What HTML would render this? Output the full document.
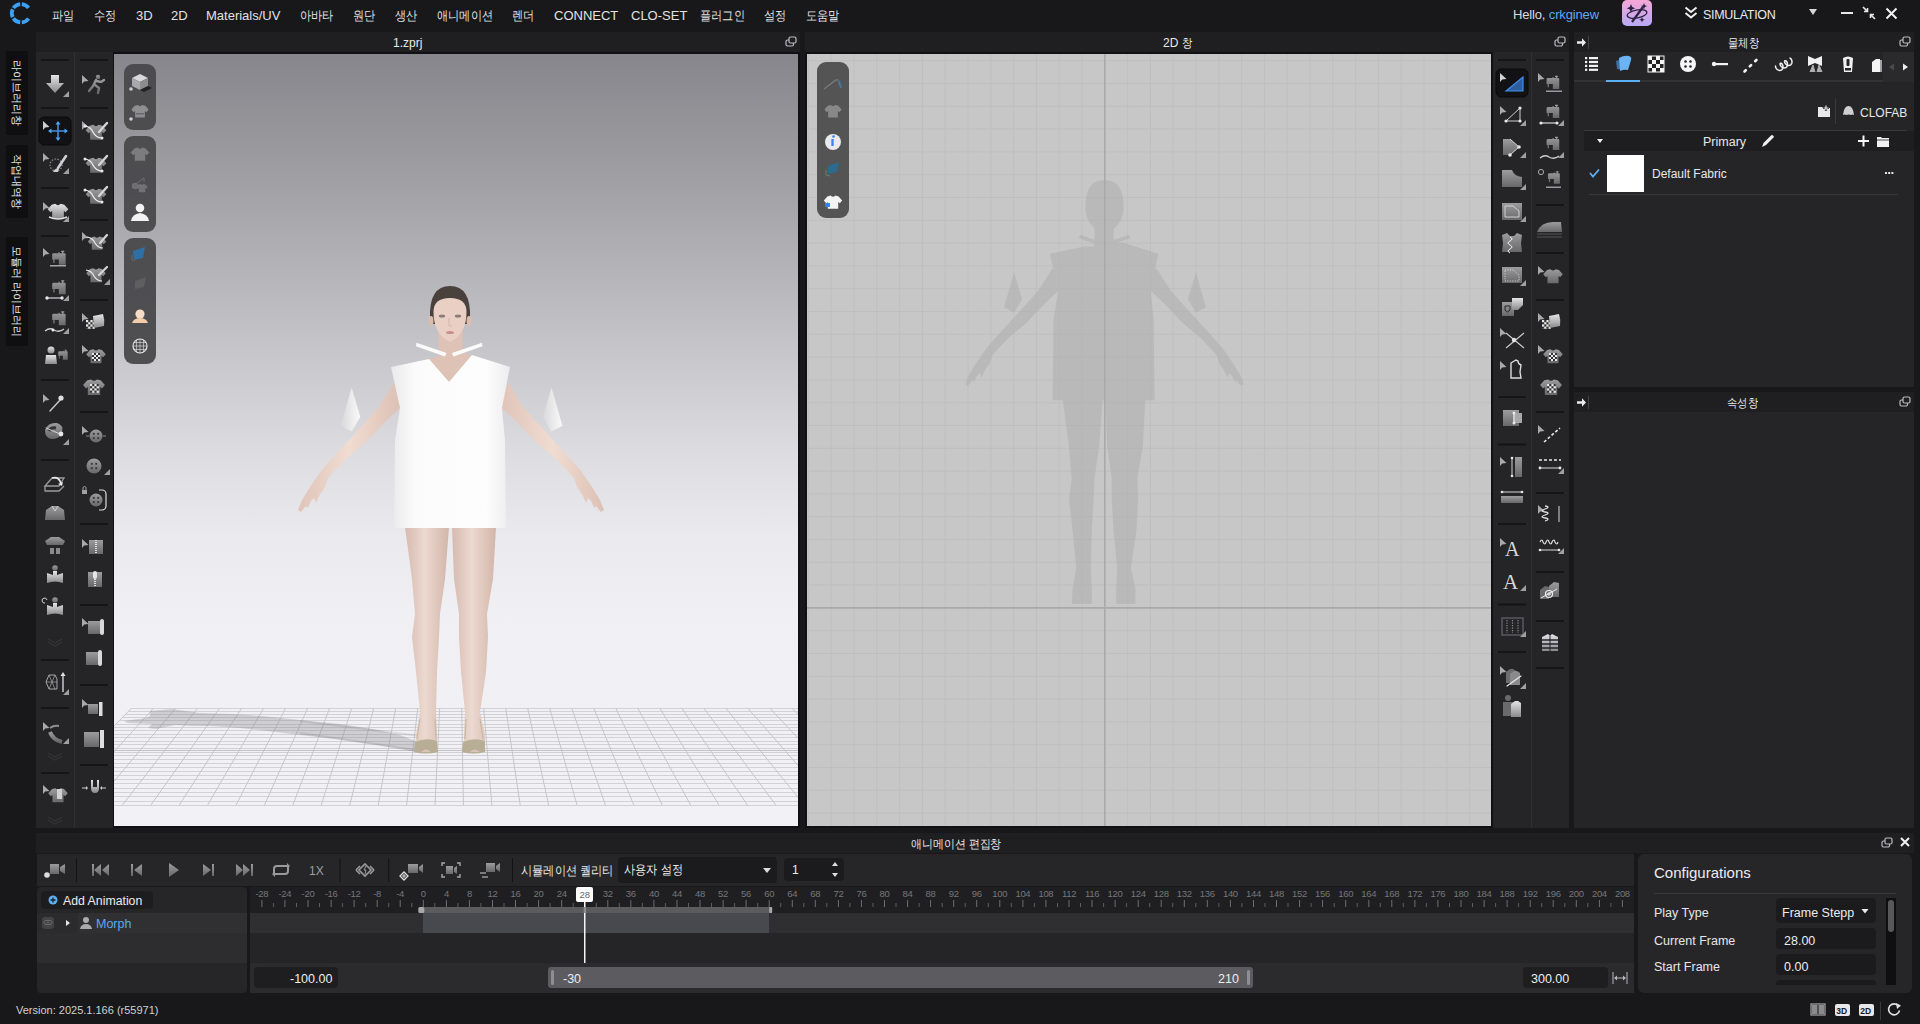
<!DOCTYPE html>
<html><head><meta charset="utf-8">
<style>
*{box-sizing:border-box;margin:0;padding:0}
html,body{width:1920px;height:1024px;overflow:hidden;background:#18181b;font-family:"Liberation Sans",sans-serif;color:#d8d8da;position:relative}
div{position:absolute}
.t{white-space:nowrap;line-height:1}
.menu{font-size:13px;color:#e2e2e4;top:9px}
.k{display:inline-block;transform:scaleX(.86);transform-origin:0 0}
.ttl{background:#1f1f22}
.tb{background:#252528}
.vtab{left:6px;width:22px;background:#0f0f11}
.vtab span{position:absolute;left:4px;writing-mode:vertical-rl;text-orientation:sideways;font-size:11.3px;color:#e6e6e8;line-height:14px}
svg{position:absolute;overflow:visible}
.sp{height:2px;background:#161618}
.ic{width:38px;height:32px}
</style></head><body>

<svg style="left:0;top:0" width="0" height="0"><defs><linearGradient id="gg" x1="0" y1="0" x2="0" y2="1"><stop offset="0" stop-color="#9c9c9f"/><stop offset="1" stop-color="#68686b"/></linearGradient><linearGradient id="gw" x1="0" y1="0" x2="0" y2="1"><stop offset="0" stop-color="#e4e4e6"/><stop offset="1" stop-color="#8a8a8d"/></linearGradient></defs></svg>
<svg style="left:0;top:0" width="40" height="30"><path d="M21.80 4.04A9.2 9.2 0 0 1 28.54 7.92M13.37 8.06A9.2 9.2 0 0 1 20.20 4.04M12.66 17.09A9.2 9.2 0 0 1 12.66 9.31M20.20 22.36A9.2 9.2 0 0 1 13.37 18.34M28.54 18.48A9.2 9.2 0 0 1 21.80 22.36" fill="none" stroke="#3d9ff2" stroke-width="3.8"/></svg>
<div class="t menu" style="left:52px"><span class="k">파일</span></div>
<div class="t menu" style="left:94px"><span class="k">수정</span></div>
<div class="t menu" style="left:136px">3D</div>
<div class="t menu" style="left:171px">2D</div>
<div class="t menu" style="left:206px">Materials/UV</div>
<div class="t menu" style="left:300px"><span class="k">아바타</span></div>
<div class="t menu" style="left:353px"><span class="k">원단</span></div>
<div class="t menu" style="left:395px"><span class="k">생산</span></div>
<div class="t menu" style="left:437px"><span class="k">애니메이션</span></div>
<div class="t menu" style="left:512px"><span class="k">렌더</span></div>
<div class="t menu" style="left:554px">CONNECT</div>
<div class="t menu" style="left:631px">CLO-SET</div>
<div class="t menu" style="left:700px"><span class="k">플러그인</span></div>
<div class="t menu" style="left:764px"><span class="k">설정</span></div>
<div class="t menu" style="left:806px"><span class="k">도움말</span></div>
<div class="t" style="left:1513px;top:8px;font-size:13px;letter-spacing:-.15px;color:#d6dbe6">Hello, <span style="color:#5aaaf0">crkginew</span></div>
<div style="left:1622px;top:0;width:30px;height:26px;border-radius:5px;background:linear-gradient(#f6a6d6,#b7a9f6)"></div>
<svg style="left:1622px;top:0" width="30" height="26" viewBox="0 0 30 26">
 <ellipse cx="15" cy="14" rx="10" ry="4" fill="none" stroke="#2a2340" stroke-width="1.3" transform="rotate(-10 15 14)"/>
 <path d="M10 22 L21 7" stroke="#2a2340" stroke-width="2.2"/>
 <path d="M9 4 l1.2 3 3 1.2 -3 1.2 -1.2 3 -1.2 -3 -3 -1.2 3 -1.2z" fill="#2a2340"/>
 <path d="M22 3 l.9 2.2 2.2 .9 -2.2 .9 -.9 2.2 -.9 -2.2 -2.2 -.9 2.2 -.9z" fill="#2a2340"/>
 <path d="M20 17 l.8 2 2 .8 -2 .8 -.8 2 -.8 -2 -2 -.8 2 -.8z" fill="#2a2340"/>
</svg>
<svg style="left:1684px;top:6px" width="14" height="14" viewBox="0 0 14 14"><path d="M1.5 1.5 L7 6 L12.5 1.5 M1.5 7 L7 11.5 L12.5 7" fill="none" stroke="#f0f0f2" stroke-width="2"/></svg>
<div class="t" style="left:1703px;top:9px;font-size:12.5px;color:#e8e8ea;letter-spacing:-.3px">SIMULATION</div>
<svg style="left:1809px;top:9px" width="8" height="6"><path d="M0 0 H8 L4 6z" fill="#d8d8da"/></svg>
<svg style="left:1841px;top:12px" width="12" height="3"><rect width="12" height="2" fill="#e8e8ea"/></svg>
<svg style="left:1862px;top:6px" width="14" height="14" viewBox="0 0 14 14"><path d="M1 1 L5.5 5.5 M5.5 2 V5.5 H2 M13 13 L8.5 8.5 M8.5 12 V8.5 H12" fill="none" stroke="#e8e8ea" stroke-width="1.6"/></svg>
<svg style="left:1885px;top:7px" width="13" height="13" viewBox="0 0 13 13"><path d="M1.5 1.5 L11.5 11.5 M11.5 1.5 L1.5 11.5" stroke="#f0f0f2" stroke-width="2"/></svg>

<div class="vtab" style="top:51px;height:84px"><span style="top:9px">라이브러리창</span></div>
<div class="vtab" style="top:145px;height:73px"><span style="top:9px">작업내역창</span></div>
<div class="vtab" style="top:237px;height:109px"><span style="top:9px">모듈러 라이브러리</span></div>

<div class="ttl" style="left:36px;top:32px;width:764px;height:20px"></div>
<div class="tb" style="left:36px;top:52px;width:77px;height:776px"></div>
<div style="left:74px;top:52px;width:1px;height:776px;background:#303033"></div>
<div style="left:113px;top:52px;width:687px;height:776px;background:#111113"></div>
<div class="ttl" style="left:805px;top:32px;width:764px;height:20px"></div>
<div style="left:805px;top:52px;width:688px;height:776px;background:#111113"></div>
<div class="tb" style="left:1493px;top:52px;width:76px;height:776px"></div>
<div style="left:1531px;top:52px;width:1px;height:776px;background:#303033"></div>
<div class="ttl" style="left:1574px;top:32px;width:340px;height:20px"></div>
<div class="tb" style="left:1574px;top:52px;width:340px;height:335px"></div>
<div class="ttl" style="left:1574px;top:392px;width:340px;height:20px"></div>
<div class="tb" style="left:1574px;top:412px;width:340px;height:416px"></div>
<div class="ttl" style="left:36px;top:833px;width:1878px;height:20px"></div>
<div style="left:37px;top:854px;width:1597px;height:32px;background:#262629"></div>
<div style="left:37px;top:887px;width:210px;height:106px;background:#262629;border-radius:4px"></div>
<div style="left:37px;top:913px;width:210px;height:20px;background:#2b2b2e"></div>
<div style="left:78px;top:913px;width:169px;height:20px;background:#303033"></div>
<div style="left:37px;top:933px;width:210px;height:30px;background:#2d2d30"></div>
<div style="left:41px;top:891px;width:112px;height:18px;background:#1d1d20;border-radius:4px"></div>
<div style="left:250px;top:887px;width:1384px;height:26px;background:#1f1f21"></div>
<div style="left:250px;top:913px;width:1384px;height:20px;background:#2f2f32"></div>
<div style="left:250px;top:933px;width:1384px;height:30px;background:#252528"></div>
<div style="left:250px;top:963px;width:1384px;height:30px;background:#2b2b2e"></div>
<div style="left:423px;top:913px;width:346px;height:20px;background:#48484f"></div>
<div style="left:420px;top:907px;width:352px;height:6px;background:#5b5b5e"></div>
<div style="left:254px;top:967px;width:84px;height:21px;background:#1e1e20;border-radius:4px"></div>
<div style="left:548px;top:967px;width:705px;height:21px;background:#5c5c60;border-radius:3px"></div>
<div style="left:1523px;top:967px;width:85px;height:21px;background:#1e1e20;border-radius:4px"></div>
<div style="left:618px;top:857px;width:159px;height:26px;background:#1b1b1d;border-radius:4px"></div>
<div style="left:784px;top:858px;width:60px;height:23px;background:#1b1b1d;border-radius:4px"></div>
<div style="left:1638px;top:854px;width:274px;height:139px;background:#262629;border-radius:6px"></div>
<div style="left:1654px;top:893px;width:242px;height:1px;background:#3a3a3d"></div>
<div style="left:1776px;top:898px;width:100px;height:25px;background:#1b1b1d;border-radius:4px"></div>
<div style="left:1776px;top:928px;width:100px;height:21px;background:#1b1b1d;border-radius:4px"></div>
<div style="left:1776px;top:954px;width:100px;height:21px;background:#1b1b1d;border-radius:4px"></div>
<div style="left:1776px;top:980px;width:100px;height:8px;background:#1b1b1d;border-radius:4px"></div>
<div style="left:1654px;top:985px;width:242px;height:8px;background:#262629"></div>
<div style="left:1886px;top:898px;width:10px;height:87px;background:#0f0f11"></div>
<div style="left:1888px;top:900px;width:6px;height:32px;background:#58585b;border-radius:3px"></div>
<div style="left:114px;top:54px;width:684px;height:772px;overflow:hidden;background:linear-gradient(#86868c 0px,#a0a0a5 130px,#c6c6cb 300px,#dcdce1 400px,#eaeaee 480px,#f0f0f4 560px,#f2f2f6 772px)">
<svg style="left:0;top:0" width="684" height="772" viewBox="114 54 684 772">
<path d="M131.7 708.5 H800" stroke="#d2d2d6" stroke-width="1"/>
<path d="M128.8 711.5 H800" stroke="#d2d2d6" stroke-width="1"/>
<path d="M125.8 714.5 H800" stroke="#d2d2d6" stroke-width="1"/>
<path d="M122.7 717.5 H800" stroke="#d2d2d6" stroke-width="1"/>
<path d="M119.6 720.5 H800" stroke="#d2d2d6" stroke-width="1"/>
<path d="M116.5 724.5 H800" stroke="#d2d2d6" stroke-width="1"/>
<path d="M113.3 727.5 H800" stroke="#d2d2d6" stroke-width="1"/>
<path d="M110.0 730.5 H800" stroke="#d2d2d6" stroke-width="1"/>
<path d="M106.7 734.5 H800" stroke="#d2d2d6" stroke-width="1"/>
<path d="M103.3 737.5 H800" stroke="#d2d2d6" stroke-width="1"/>
<path d="M99.9 741.5 H800" stroke="#d2d2d6" stroke-width="1"/>
<path d="M96.4 744.5 H800" stroke="#d2d2d6" stroke-width="1"/>
<path d="M92.8 748.5 H800" stroke="#d2d2d6" stroke-width="1"/>
<path d="M89.2 752.5 H800" stroke="#d2d2d6" stroke-width="1"/>
<path d="M85.6 755.5 H800" stroke="#d2d2d6" stroke-width="1"/>
<path d="M81.9 759.5 H800" stroke="#d2d2d6" stroke-width="1"/>
<path d="M78.1 763.5 H800" stroke="#d2d2d6" stroke-width="1"/>
<path d="M74.3 767.5 H800" stroke="#d2d2d6" stroke-width="1"/>
<path d="M70.4 771.5 H800" stroke="#d2d2d6" stroke-width="1"/>
<path d="M66.4 775.5 H800" stroke="#d2d2d6" stroke-width="1"/>
<path d="M62.5 779.5 H800" stroke="#d2d2d6" stroke-width="1"/>
<path d="M58.4 783.5 H800" stroke="#d2d2d6" stroke-width="1"/>
<path d="M54.3 788.5 H800" stroke="#d2d2d6" stroke-width="1"/>
<path d="M50.1 792.5 H800" stroke="#d2d2d6" stroke-width="1"/>
<path d="M45.9 796.5 H800" stroke="#d2d2d6" stroke-width="1"/>
<path d="M41.7 801.5 H800" stroke="#d2d2d6" stroke-width="1"/>
<path d="M37.3 805.5 H800" stroke="#d2d2d6" stroke-width="1"/>
<path d="M131.7 708 L37.3 805" stroke="#c6c6ca" stroke-width="1"/>
<path d="M153.7 708 L65.7 805" stroke="#c6c6ca" stroke-width="1"/>
<path d="M175.7 708 L94.1 805" stroke="#c6c6ca" stroke-width="1"/>
<path d="M197.7 708 L122.5 805" stroke="#c6c6ca" stroke-width="1"/>
<path d="M219.7 708 L150.9 805" stroke="#c6c6ca" stroke-width="1"/>
<path d="M241.7 708 L179.3 805" stroke="#c6c6ca" stroke-width="1"/>
<path d="M263.7 708 L207.7 805" stroke="#c6c6ca" stroke-width="1"/>
<path d="M285.7 708 L236.1 805" stroke="#c6c6ca" stroke-width="1"/>
<path d="M307.7 708 L264.5 805" stroke="#c6c6ca" stroke-width="1"/>
<path d="M329.7 708 L292.9 805" stroke="#c6c6ca" stroke-width="1"/>
<path d="M351.7 708 L321.3 805" stroke="#c6c6ca" stroke-width="1"/>
<path d="M373.7 708 L349.8 805" stroke="#c6c6ca" stroke-width="1"/>
<path d="M395.7 708 L378.2 805" stroke="#c6c6ca" stroke-width="1"/>
<path d="M417.7 708 L406.6 805" stroke="#c6c6ca" stroke-width="1"/>
<path d="M439.7 708 L435.0 805" stroke="#c6c6ca" stroke-width="1"/>
<path d="M461.7 708 L463.4 805" stroke="#c6c6ca" stroke-width="1"/>
<path d="M483.7 708 L491.8 805" stroke="#c6c6ca" stroke-width="1"/>
<path d="M505.7 708 L520.2 805" stroke="#c6c6ca" stroke-width="1"/>
<path d="M527.7 708 L548.6 805" stroke="#c6c6ca" stroke-width="1"/>
<path d="M549.7 708 L577.0 805" stroke="#c6c6ca" stroke-width="1"/>
<path d="M571.7 708 L605.4 805" stroke="#c6c6ca" stroke-width="1"/>
<path d="M593.7 708 L633.8 805" stroke="#c6c6ca" stroke-width="1"/>
<path d="M615.7 708 L662.2 805" stroke="#c6c6ca" stroke-width="1"/>
<path d="M637.7 708 L690.6 805" stroke="#c6c6ca" stroke-width="1"/>
<path d="M659.7 708 L719.0 805" stroke="#c6c6ca" stroke-width="1"/>
<path d="M681.7 708 L747.4 805" stroke="#c6c6ca" stroke-width="1"/>
<path d="M703.7 708 L775.8 805" stroke="#c6c6ca" stroke-width="1"/>
<path d="M725.7 708 L804.2 805" stroke="#c6c6ca" stroke-width="1"/>
<path d="M747.7 708 L832.6 805" stroke="#c6c6ca" stroke-width="1"/>
<path d="M769.7 708 L861.0 805" stroke="#c6c6ca" stroke-width="1"/>
<path d="M791.7 708 L889.4 805" stroke="#c6c6ca" stroke-width="1"/>
<path d="M813.7 708 L917.8 805" stroke="#c6c6ca" stroke-width="1"/>
<path d="M835.7 708 L946.2 805" stroke="#c6c6ca" stroke-width="1"/>
<path d="M857.7 708 L974.6 805" stroke="#c6c6ca" stroke-width="1"/>
<path d="M114 750.5 H800" stroke="#c4c4c8" stroke-width="1"/>
<defs><linearGradient id="skin" x1="0" x2="1"><stop offset="0" stop-color="#dfc4b9"/><stop offset=".5" stop-color="#f1dcd2"/><stop offset="1" stop-color="#dcc0b4"/></linearGradient><linearGradient id="leg" x1="0" x2="1"><stop offset="0" stop-color="#d6bab0"/><stop offset=".45" stop-color="#ecd9d0"/><stop offset="1" stop-color="#d2b5a9"/></linearGradient><linearGradient id="shirt" x1="0" x2="1"><stop offset="0" stop-color="#e9e9eb"/><stop offset=".2" stop-color="#fbfbfb"/><stop offset=".8" stop-color="#fdfdfd"/><stop offset="1" stop-color="#ececee"/></linearGradient><linearGradient id="flap" x1="0" x2="1"><stop offset="0" stop-color="#d8d8da"/><stop offset="1" stop-color="#fafafa"/></linearGradient></defs>
<polygon points="150,711 172,709 186,711 200,713 232,714 262,716 300,720 340,724 372,729 400,735 418,742 428,750 422,753 400,749 370,744 335,739 300,735 268,731 240,728 210,726 192,726 176,725 165,727 156,729 148,728 152,724 128,723 124,721 146,718 150,716" fill="#78787e" fill-opacity=".29"/>
<path d="M300 721 L420 736 M300 733 L430 752" stroke="#78787e" stroke-opacity=".18" stroke-width="2"/>
<polygon points="394,383 378,408 359,429 338,452 321,471 310,487 302,500 298,510 301,512 306,506 307.5,508 311,501 314,498 316,503 319,496 325,487 328,478 346,459 365,443 384,423 400,408 400,390" fill="url(#skin)"/>
<polygon points="508,383 524,408 543,429 564,452 581,471 592,487 600,500 604,510 601,512 596,506 594.5,508 591,501 588,498 586,503 583,496 577,487 574,478 556,459 537,443 518,423 502,408 502,390" fill="url(#skin)"/>
<polygon points="405,527 412,579 415,614 412,637 416,672 420,712 416,735 415,752 437,752 437,735 436,712 437,672 439,637 440,614 445,579 449,527" fill="url(#leg)"/>
<polygon points="452,527 454,579 459,614 459,637 461,672 465,712 464,735 464,752 485,752 485,735 480,712 486,672 488,637 487,614 493,579 496,527" fill="url(#leg)"/>
<path d="M415 742 q11 -5 22 -1 l1 11 q-12 3 -24 0z M463 742 q11 -5 22 -1 l0 11 q-12 3 -23 0z" fill="#b8ae96"/><path d="M417 739 l3 -20 M436 739 l-1 -20 M465 739 l1 -20 M483 739 l-3 -20" stroke="#c2b8a2" stroke-width="1"/><path d="M421 752 q5 -5 10 0z M470 752 q5 -5 10 0z" fill="#dcc3b8"/>
<path d="M438.5 330 h24 v22 l10 4 l-23.5 27 l-20.5 -24 l10 -3z" fill="#dec2b6"/>
<path d="M430 318 q-1 -32 20 -32 q21 0 20 32 l-3 6 l-34 0z" fill="#4a403c"/>
<ellipse cx="431" cy="321" rx="2.5" ry="5" fill="#dcbcae"/><ellipse cx="469" cy="321" rx="2.5" ry="5" fill="#dcbcae"/>
<path d="M433.5 312 q0 -14 16.5 -14 q16.5 0 16.5 14 q0 22 -16.5 30 q-16.5 -8 -16.5 -30z" fill="#ead0c4"/>
<ellipse cx="442" cy="316" rx="3.2" ry="1.5" fill="#8a7a78"/><ellipse cx="458" cy="316" rx="3.2" ry="1.5" fill="#8a7a78"/><ellipse cx="450" cy="332.5" rx="4" ry="1.6" fill="#c48e8c"/><path d="M449 318 v8 h3" stroke="#d6b4a8" fill="none"/>
<polygon points="391,367 429,359 449,382 472,355 510,367 502,408 505,440 506,528 394,528 395,440 400,408" fill="url(#shirt)"/>
<polygon points="351.6,387.6 340.6,425.7 351.6,431.6 360.3,417" fill="url(#flap)"/><polygon points="551.5,387.6 562.4,425.7 551.5,431.6 542.7,417" fill="url(#flap)"/>
<path d="M416.5 342.7 L446.5 353 L445 356.5 L416 346.2z M482 342.7 L452 353 L453.5 356.5 L482.5 346.2z" fill="#fbfbfb"/>
<rect x="124" y="64" width="32" height="66" rx="9" fill="#4a4a4d" fill-opacity=".96"/>
<rect x="124" y="136" width="32" height="96" rx="9" fill="#4a4a4d" fill-opacity=".96"/>
<rect x="124" y="238" width="32" height="126" rx="9" fill="#4a4a4d" fill-opacity=".96"/>
<path d="M132 78 l8 -4 l8 4 l-8 4z" fill="#d9d9db"/><path d="M132 78 v8 l8 4 v-8z" fill="#a9a9ac"/><path d="M148 78 v8 l-8 4 v-8z" fill="#8c8c8f"/><path d="M140 90 l8 -4 l4 2 l-8 4z" fill="#222"/><circle cx="131" cy="89" r="1.8" fill="#d0d0d2"/>
<path transform="translate(140 111) scale(0.75)" d="M-3 -8 L-7 -7 L-11.5 -2 L-8.5 1.5 L-6.5 0 L-6.5 8.5 L6.5 8.5 L6.5 0 L8.5 1.5 L11.5 -2 L7 -7 L3 -8 Q0 -5 -3 -8z" fill="#8e8e91"/><rect x="136" y="113" width="8" height="1.5" fill="#6a6a6d"/><circle cx="131" cy="119" r="1.8" fill="#d0d0d2"/>
<path transform="translate(140 154) scale(0.8)" d="M-3 -8 L-7 -7 L-11.5 -2 L-8.5 1.5 L-6.5 0 L-6.5 8.5 L6.5 8.5 L6.5 0 L8.5 1.5 L11.5 -2 L7 -7 L3 -8 Q0 -5 -3 -8z" fill="#7c7c7f"/>
<circle cx="135" cy="186" r="3.2" fill="#6f6f72"/><path d="M136 184 l8 -6 v4" stroke="#6f6f72" stroke-width="1" fill="none"/><path transform="translate(142 188) scale(0.5)" d="M-3 -8 L-7 -7 L-11.5 -2 L-8.5 1.5 L-6.5 0 L-6.5 8.5 L6.5 8.5 L6.5 0 L8.5 1.5 L11.5 -2 L7 -7 L3 -8 Q0 -5 -3 -8z" fill="#727275"/>
<circle cx="140" cy="208" r="4.3" fill="#f2f2f2"/><path d="M131 221 q1 -7 9 -8 q8 1 9 8z" fill="#f2f2f2"/>
<path d="M133 251 l12 -4 l-2 11 l-9 2z" fill="#2e6fa6"/><path d="M132 255 v5 l3 1" stroke="#666" fill="none"/>
<path d="M135 281 l11 -4 l-2 10 l-9 2z" fill="#5e5e61"/>
<circle cx="140" cy="314" r="4.6" fill="#f6dcc4"/><path d="M132 323 q2 -5 8 -5 q6 0 8 5z" fill="#f3cda9"/>
<circle cx="140" cy="346" r="7" fill="none" stroke="#e6e6e8" stroke-width="1.2"/><path d="M133 346 h14 M140 339 v14 M134 342.5 h12 M134 349.5 h12 M136.5 340 v12 M143.5 340 v12" stroke="#e6e6e8" stroke-width=".6"/>
</svg></div>
<div style="left:807px;top:54px;width:684px;height:772px;overflow:hidden;background:#c7c7c7">
<svg style="left:0;top:0" width="684" height="772" viewBox="807 54 684 772">
<path d="M808.4 54 V826" stroke="#bfbfbf" stroke-width="1"/>
<path d="M831.2 54 V826" stroke="#bfbfbf" stroke-width="1"/>
<path d="M854.0 54 V826" stroke="#bfbfbf" stroke-width="1"/>
<path d="M876.8 54 V826" stroke="#bfbfbf" stroke-width="1"/>
<path d="M899.6 54 V826" stroke="#bfbfbf" stroke-width="1"/>
<path d="M922.4 54 V826" stroke="#bfbfbf" stroke-width="1"/>
<path d="M945.2 54 V826" stroke="#bfbfbf" stroke-width="1"/>
<path d="M968.0 54 V826" stroke="#bfbfbf" stroke-width="1"/>
<path d="M990.8 54 V826" stroke="#bfbfbf" stroke-width="1"/>
<path d="M1013.6 54 V826" stroke="#bfbfbf" stroke-width="1"/>
<path d="M1036.4 54 V826" stroke="#bfbfbf" stroke-width="1"/>
<path d="M1059.2 54 V826" stroke="#bfbfbf" stroke-width="1"/>
<path d="M1082.0 54 V826" stroke="#bfbfbf" stroke-width="1"/>
<path d="M1127.6 54 V826" stroke="#bfbfbf" stroke-width="1"/>
<path d="M1150.4 54 V826" stroke="#bfbfbf" stroke-width="1"/>
<path d="M1173.2 54 V826" stroke="#bfbfbf" stroke-width="1"/>
<path d="M1196.0 54 V826" stroke="#bfbfbf" stroke-width="1"/>
<path d="M1218.8 54 V826" stroke="#bfbfbf" stroke-width="1"/>
<path d="M1241.6 54 V826" stroke="#bfbfbf" stroke-width="1"/>
<path d="M1264.4 54 V826" stroke="#bfbfbf" stroke-width="1"/>
<path d="M1287.2 54 V826" stroke="#bfbfbf" stroke-width="1"/>
<path d="M1310.0 54 V826" stroke="#bfbfbf" stroke-width="1"/>
<path d="M1332.8 54 V826" stroke="#bfbfbf" stroke-width="1"/>
<path d="M1355.6 54 V826" stroke="#bfbfbf" stroke-width="1"/>
<path d="M1378.4 54 V826" stroke="#bfbfbf" stroke-width="1"/>
<path d="M1401.2 54 V826" stroke="#bfbfbf" stroke-width="1"/>
<path d="M1424.0 54 V826" stroke="#bfbfbf" stroke-width="1"/>
<path d="M1446.8 54 V826" stroke="#bfbfbf" stroke-width="1"/>
<path d="M1469.6 54 V826" stroke="#bfbfbf" stroke-width="1"/>
<path d="M807 37.9 H1491" stroke="#bfbfbf" stroke-width="1"/>
<path d="M807 60.7 H1491" stroke="#bfbfbf" stroke-width="1"/>
<path d="M807 83.5 H1491" stroke="#bfbfbf" stroke-width="1"/>
<path d="M807 106.3 H1491" stroke="#bfbfbf" stroke-width="1"/>
<path d="M807 129.1 H1491" stroke="#bfbfbf" stroke-width="1"/>
<path d="M807 151.9 H1491" stroke="#bfbfbf" stroke-width="1"/>
<path d="M807 174.7 H1491" stroke="#bfbfbf" stroke-width="1"/>
<path d="M807 197.5 H1491" stroke="#bfbfbf" stroke-width="1"/>
<path d="M807 220.3 H1491" stroke="#bfbfbf" stroke-width="1"/>
<path d="M807 243.1 H1491" stroke="#bfbfbf" stroke-width="1"/>
<path d="M807 265.9 H1491" stroke="#bfbfbf" stroke-width="1"/>
<path d="M807 288.7 H1491" stroke="#bfbfbf" stroke-width="1"/>
<path d="M807 311.5 H1491" stroke="#bfbfbf" stroke-width="1"/>
<path d="M807 334.3 H1491" stroke="#bfbfbf" stroke-width="1"/>
<path d="M807 357.1 H1491" stroke="#bfbfbf" stroke-width="1"/>
<path d="M807 379.9 H1491" stroke="#bfbfbf" stroke-width="1"/>
<path d="M807 402.7 H1491" stroke="#bfbfbf" stroke-width="1"/>
<path d="M807 425.5 H1491" stroke="#bfbfbf" stroke-width="1"/>
<path d="M807 448.3 H1491" stroke="#bfbfbf" stroke-width="1"/>
<path d="M807 471.1 H1491" stroke="#bfbfbf" stroke-width="1"/>
<path d="M807 493.9 H1491" stroke="#bfbfbf" stroke-width="1"/>
<path d="M807 516.7 H1491" stroke="#bfbfbf" stroke-width="1"/>
<path d="M807 539.5 H1491" stroke="#bfbfbf" stroke-width="1"/>
<path d="M807 562.3 H1491" stroke="#bfbfbf" stroke-width="1"/>
<path d="M807 585.1 H1491" stroke="#bfbfbf" stroke-width="1"/>
<path d="M807 630.7 H1491" stroke="#bfbfbf" stroke-width="1"/>
<path d="M807 653.5 H1491" stroke="#bfbfbf" stroke-width="1"/>
<path d="M807 676.3 H1491" stroke="#bfbfbf" stroke-width="1"/>
<path d="M807 699.1 H1491" stroke="#bfbfbf" stroke-width="1"/>
<path d="M807 721.9 H1491" stroke="#bfbfbf" stroke-width="1"/>
<path d="M807 744.7 H1491" stroke="#bfbfbf" stroke-width="1"/>
<path d="M807 767.5 H1491" stroke="#bfbfbf" stroke-width="1"/>
<path d="M807 790.3 H1491" stroke="#bfbfbf" stroke-width="1"/>
<path d="M807 813.1 H1491" stroke="#bfbfbf" stroke-width="1"/>
<g transform="translate(694.13 -80.15) scale(0.9099)" opacity=".5"><polygon points="394,383 378,408 359,429 338,452 321,471 310,487 302,500 298,510 301,512 306,506 307.5,508 311,501 314,498 316,503 319,496 325,487 328,478 346,459 365,443 384,423 400,408 400,390" fill="#adadad"/><polygon points="508,383 524,408 543,429 564,452 581,471 592,487 600,500 604,510 601,512 596,506 594.5,508 591,501 588,498 586,503 583,496 577,487 574,478 556,459 537,443 518,423 502,408 502,390" fill="#adadad"/><polygon points="405,527 412,579 415,614 412,637 416,672 420,712 416,735 415,752 437,752 437,735 436,712 437,672 439,637 440,614 445,579 449,527" fill="#adadad"/><polygon points="452,527 454,579 459,614 459,637 461,672 465,712 464,735 464,752 485,752 485,735 480,712 486,672 488,637 487,614 493,579 496,527" fill="#adadad"/><path d="M440 330 h21 v25 l11 0 l-23 28 l-21 -24 l12 0z" fill="#adadad"/><path d="M430 318 q-1 -32 21 -32 q22 0 21 32 q-2 20 -21 27 q-19 -7 -21 -27z" fill="#adadad"/><polygon points="391,367 429,359 449,382 472,355 510,367 502,408 505,440 506,528 394,528 395,440 400,408" fill="#adadad"/><polygon points="351.6,387.6 340.6,425.7 351.6,431.6 360.3,417" fill="#adadad"/><polygon points="551.5,387.6 562.4,425.7 551.5,431.6 542.7,417" fill="#adadad"/><path d="M424 346 L447 354 L446 358 L423 350z M478 346 L455 354 L456 358 L479 350z" fill="#adadad"/></g>
<path d="M1104.8 54 V826" stroke="#a9a9a9" stroke-width="1.6"/>
<path d="M807 607.9 H1491" stroke="#a9a9a9" stroke-width="1.6"/>
<rect x="817" y="62" width="32" height="156" rx="9" fill="#515151" fill-opacity=".97"/>
<path d="M824 89 l12 -9 q2 -1 3 2 l2 6" stroke="#777" stroke-width="1.5" fill="none"/><path d="M838 80 q4 3 3 8" stroke="#3a6ea0" stroke-width="1.2" fill="none"/>
<path transform="translate(833 111) scale(0.75)" d="M-3 -8 L-7 -7 L-11.5 -2 L-8.5 1.5 L-6.5 0 L-6.5 8.5 L6.5 8.5 L6.5 0 L8.5 1.5 L11.5 -2 L7 -7 L3 -8 Q0 -5 -3 -8z" fill="#888"/>
<circle cx="833" cy="142" r="8" fill="#e9e9ee"/><path d="M832.5 139 v7" stroke="#3a82f0" stroke-width="2.3"/><circle cx="833.5" cy="136.5" r="1.3" fill="#3a82f0"/>
<path d="M828 166 l11 -4 l-2 10 l-9 2z" fill="#2d6a8f"/><path d="M826 170 v5 l4 1" stroke="#777" fill="none"/>
<path transform="translate(833 202) scale(0.8)" d="M-3 -8 L-7 -7 L-11.5 -2 L-8.5 1.5 L-6.5 0 L-6.5 8.5 L6.5 8.5 L6.5 0 L8.5 1.5 L11.5 -2 L7 -7 L3 -8 Q0 -5 -3 -8z" fill="#f4f4f4"/><rect x="825" y="203" width="5" height="4" fill="#3a82f0"/>
</svg></div>
<svg style="left:0;top:0" width="1920" height="1024">
<rect x="41" y="59" width="28" height="2" fill="#151517"/>
<rect x="41" y="107" width="28" height="2" fill="#151517"/>
<rect x="41" y="187" width="28" height="2" fill="#151517"/>
<rect x="41" y="235" width="28" height="2" fill="#151517"/>
<rect x="41" y="379" width="28" height="2" fill="#151517"/>
<rect x="41" y="459" width="28" height="2" fill="#151517"/>
<rect x="41" y="659" width="28" height="2" fill="#151517"/>
<rect x="41" y="707" width="28" height="2" fill="#151517"/>
<rect x="41" y="772" width="28" height="2" fill="#151517"/>
<rect x="80" y="59" width="28" height="2" fill="#151517"/>
<rect x="80" y="107" width="28" height="2" fill="#151517"/>
<rect x="80" y="219" width="28" height="2" fill="#151517"/>
<rect x="80" y="299" width="28" height="2" fill="#151517"/>
<rect x="80" y="411" width="28" height="2" fill="#151517"/>
<rect x="80" y="523" width="28" height="2" fill="#151517"/>
<rect x="80" y="604" width="28" height="2" fill="#151517"/>
<rect x="80" y="684" width="28" height="2" fill="#151517"/>
<rect x="80" y="764" width="28" height="2" fill="#151517"/>
<path d="M51 75 h8 v8 h5 l-9 10 l-9 -10 h5z" fill="url(#gw)"/><path d="M69 97 h-6 l6 -6z" fill="#a0a0a3"/>
<rect x="39" y="117" width="32" height="28" rx="5" fill="#121214" stroke="#0a0a0a" stroke-width="1"/>
<path d="M43 121 v9 l2.2 -2.6 L49.5 127z" fill="#cfcfd2"/>
<path d="M58 122 v18 M49 131 h18" stroke="#3d8fe0" stroke-width="1.6"/><path d="M58 121 l-2.5 3.5 h5z M58 141 l-2.5 -3.5 h5z M48 131 l3.5 -2.5 v5z M68 131 l-3.5 -2.5 v5z" fill="#4aa3f5"/>
<path d="M43 153 v9 l2.2 -2.6 L49.5 159z" fill="#a9a9ac"/><circle cx="56" cy="165" r="6" fill="none" stroke="#9a9a9d" stroke-width="1.2" stroke-dasharray="1.3 1.6"/><path d="M66 156 L58 168" stroke="#cfcfd2" stroke-width="2.6" stroke-linecap="round"/><path d="M53 172 q2 -4 6 -4 l-1 4z" fill="#cfcfd2"/><path d="M69 174 h-6 l6 -6z" fill="#a0a0a3"/>
<path d="M43 202 v9 l2.2 -2.6 L49.5 208z" fill="#a9a9ac"/><path transform="translate(58 211) scale(0.9)" d="M-3 -8 L-7 -7 L-11.5 -2 L-8.5 1.5 L-6.5 0 L-6.5 8.5 L6.5 8.5 L6.5 0 L8.5 1.5 L11.5 -2 L7 -7 L3 -8 Q0 -5 -3 -8z" fill="url(#gw)"/><path d="M49 217 q9 4 18 0" stroke="#e0e0e2" stroke-width="1.4" fill="none"/><path d="M69 222 h-6 l6 -6z" fill="#a0a0a3"/>
<path d="M43 248 v9 l2.2 -2.6 L49.5 254z" fill="#a9a9ac"/><path transform="translate(59 259.0) scale(0.977)" d="M-7 -4.5 q0 -1.5 1.5 -1.5 h5 v-1 h1.2 v1 h2.3 v-1.2 h-0.8 v-1.2 h3.2 v1.2 h-0.8 v1.2 h1.2 q1 0 1 1 v11 h-7 v-5.5 h-4.3 v3.7 h-1.4 v-3.7 h-1.1z" fill="url(#gg)"/><rect x="50" y="265" width="16" height="1.5" fill="#a5a5a8"/>
<path transform="translate(59 288.5) scale(0.977)" d="M-7 -4.5 q0 -1.5 1.5 -1.5 h5 v-1 h1.2 v1 h2.3 v-1.2 h-0.8 v-1.2 h3.2 v1.2 h-0.8 v1.2 h1.2 q1 0 1 1 v11 h-7 v-5.5 h-4.3 v3.7 h-1.4 v-3.7 h-1.1z" fill="url(#gg)"/><path d="M47 298 h15" stroke="#d8d8da" stroke-width="1.2"/><circle cx="47" cy="298" r="1.7" fill="#e8e8ea"/><circle cx="62" cy="298" r="1.7" fill="#e8e8ea"/><path d="M69 301 h-6 l6 -6z" fill="#a0a0a3"/>
<path transform="translate(59 319.5) scale(0.977)" d="M-7 -4.5 q0 -1.5 1.5 -1.5 h5 v-1 h1.2 v1 h2.3 v-1.2 h-0.8 v-1.2 h3.2 v1.2 h-0.8 v1.2 h1.2 q1 0 1 1 v11 h-7 v-5.5 h-4.3 v3.7 h-1.4 v-3.7 h-1.1z" fill="url(#gg)"/><path d="M45 331 q5 -4 9 -1 q5 3 10 -1" fill="none" stroke="#cfcfd2" stroke-width="1.3"/><circle cx="53" cy="330" r="1.5" fill="#e8e8ea"/><path d="M69 334 h-6 l6 -6z" fill="#a0a0a3"/>
<g transform="translate(51 356) scale(1.0)"><circle cx="0" cy="-6" r="3.5" fill="url(#gw)"/><path d="M-5 -1 h10 l1 9 h-12z" fill="url(#gw)"/></g><path transform="translate(63 355.5) scale(0.690)" d="M-7 -4.5 q0 -1.5 1.5 -1.5 h5 v-1 h1.2 v1 h2.3 v-1.2 h-0.8 v-1.2 h3.2 v1.2 h-0.8 v1.2 h1.2 q1 0 1 1 v11 h-7 v-5.5 h-4.3 v3.7 h-1.4 v-3.7 h-1.1z" fill="url(#gg)"/>
<path d="M43 394 v9 l2.2 -2.6 L49.5 400z" fill="#a9a9ac"/><path d="M50 411 L61 399" stroke="#c8c8ca" stroke-width="1.4" stroke-linecap="round"/><circle cx="61" cy="398" r="2.6" fill="#dedee0"/>
<path d="M45 430 q3 -8 12 -7 q7 2 5 10 q-2 6 -11 6 q-6 -1 -6 -9z" fill="url(#gg)"/><path d="M49 431 q2 -4 7 -3" stroke="#333" stroke-width="3" fill="none"/><path d="M46 428 L60 434" stroke="#d0d0d2" stroke-width="1" stroke-linecap="round"/><circle cx="61" cy="434" r="2.4" fill="#e6e6e8"/><path d="M69 445 h-6 l6 -6z" fill="#a0a0a3"/>
<path d="M45 486 l7 -8 l12 0 l-5 8 z M45 486 v5 h14 l5 -5" fill="none" stroke="#9a9a9d" stroke-width="1.3"/><path d="M52 478 q8 -2 9 7" stroke="#e8e8ea" stroke-width="1.6" fill="none"/><path d="M58 484 l4 2 l1 -4z" fill="#e8e8ea"/>
<path d="M46 510 l6 -4 h6 l6 4 l1 10 h-20z" fill="url(#gg)"/><path d="M52 506 l3 5 l3 -5" stroke="#cfcfd2" stroke-width="1" fill="none"/>
<path d="M45 541 l6 -4 h8 l6 4 l-2 4 h-16z" fill="url(#gg)"/><rect x="50" y="548" width="4" height="6" fill="#8a8a8d"/><rect x="56" y="548" width="4" height="6" fill="#8a8a8d"/>
<circle cx="55" cy="568" r="2.8" fill="url(#gg)"/><path d="M53 571 h4 v4 l6 -2 v10 q-8 -3 -16 0 v-10 l6 2z" fill="url(#gw)"/>
<circle cx="55" cy="600" r="2.8" fill="url(#gg)"/><path d="M53 603 h4 v4 l6 -2 v10 q-8 -3 -16 0 v-10 l6 2z" fill="url(#gw)"/><path d="M45 603 a2.5 2.5 0 1 1 2 -3" fill="none" stroke="#cfcfd2" stroke-width="1"/>
<path d="M48 639 l7 4 l7 -4 M48 642 l7 4 l7 -4" fill="none" stroke="#343437" stroke-width="1.1"/>
<path d="M46 682 l3 -7 h6 l2 4 v10 h-8 z" fill="none" stroke="#a8a8ab" stroke-width="1"/><path d="M49 675 l6 14 M55 675 l-6 14 M46 682 h11" stroke="#a8a8ab" stroke-width=".7"/><path d="M63 674 v18" stroke="#e0e0e2" stroke-width="1.3"/><path d="M63 672 l-2.5 4 h5z" fill="#e0e0e2"/><path d="M69 695 h-6 l6 -6z" fill="#a0a0a3"/>
<path d="M43 722 v9 l2.2 -2.6 L49.5 728z" fill="#a9a9ac"/><path d="M50 732 q3 8 12 10" stroke="url(#gg)" stroke-width="4" fill="none"/><path d="M50 728 q4 -3 9 -2" stroke="#8f8f92" stroke-width="2" fill="none"/><path d="M69 744 h-6 l6 -6z" fill="#a0a0a3"/>
<path d="M48 753 l7 4 l7 -4 M48 756 l7 4 l7 -4" fill="none" stroke="#343437" stroke-width="1.1"/>
<path d="M43 785 v9 l2.2 -2.6 L49.5 791z" fill="#a9a9ac"/><path transform="translate(58 795) scale(0.85)" d="M-3 -8 L-7 -7 L-11.5 -2 L-8.5 1.5 L-6.5 0 L-6.5 8.5 L6.5 8.5 L6.5 0 L8.5 1.5 L11.5 -2 L7 -7 L3 -8 Q0 -5 -3 -8z" fill="url(#gg)"/><rect x="57" y="789" width="5" height="10" fill="#d0d0d2"/>
<path d="M48 817 l7 4 l7 -4 M48 820 l7 4 l7 -4" fill="none" stroke="#343437" stroke-width="1.1"/>
<path d="M82 75 v9 l2.2 -2.6 L88.5 81z" fill="#a9a9ac"/><circle cx="98" cy="77" r="2.2" fill="url(#gg)"/><path d="M96 80 l-3 6 l-4 5 M95 85 l4 3 l-1 5 M96 81 l5 1 l3 -2" stroke="url(#gg)" stroke-width="2.4" fill="none" stroke-linecap="round"/>
<path d="M82 121 v9 l2.2 -2.6 L88.5 127z" fill="#a9a9ac"/>
<path transform="translate(96 132) scale(0.9)" d="M-3 -8 L-7 -7 L-11.5 -2 L-8.5 1.5 L-6.5 0 L-6.5 8.5 L6.5 8.5 L6.5 0 L8.5 1.5 L11.5 -2 L7 -7 L3 -8 Q0 -5 -3 -8z" fill="url(#gg)"/><path d="M107 123 L99 132" stroke="#d5d5d7" stroke-width="2.4" stroke-linecap="round"/><path d="M85 126 q6 1 8 6 q3 6 9 6" fill="none" stroke="#f0f0f2" stroke-width="1.2"/><circle cx="85" cy="126" r="1.5" fill="#e8e8ea"/><circle cx="102" cy="138" r="1.5" fill="#e8e8ea"/>
<path transform="translate(96 165) scale(0.9)" d="M-3 -8 L-7 -7 L-11.5 -2 L-8.5 1.5 L-6.5 0 L-6.5 8.5 L6.5 8.5 L6.5 0 L8.5 1.5 L11.5 -2 L7 -7 L3 -8 Q0 -5 -3 -8z" fill="url(#gg)"/><path d="M107 156 L99 165" stroke="#d5d5d7" stroke-width="2.4" stroke-linecap="round"/><path d="M85 159 q6 1 8 6 q3 6 9 6" fill="none" stroke="#f0f0f2" stroke-width="1.2"/><circle cx="85" cy="159" r="1.5" fill="#e8e8ea"/><circle cx="102" cy="171" r="1.5" fill="#e8e8ea"/>
<path transform="translate(96 196) scale(0.9)" d="M-3 -8 L-7 -7 L-11.5 -2 L-8.5 1.5 L-6.5 0 L-6.5 8.5 L6.5 8.5 L6.5 0 L8.5 1.5 L11.5 -2 L7 -7 L3 -8 Q0 -5 -3 -8z" fill="url(#gg)"/><path d="M107 187 L99 196" stroke="#d5d5d7" stroke-width="2.4" stroke-linecap="round"/><path d="M85 190 q6 1 8 6 q3 6 9 6" fill="none" stroke="#f0f0f2" stroke-width="1.2"/><circle cx="85" cy="190" r="1.5" fill="#e8e8ea"/><circle cx="102" cy="202" r="1.5" fill="#e8e8ea"/>
<path d="M82 232 v9 l2.2 -2.6 L88.5 238z" fill="#a9a9ac"/><path transform="translate(97 243) scale(0.8)" d="M-3 -8 L-7 -7 L-11.5 -2 L-8.5 1.5 L-6.5 0 L-6.5 8.5 L6.5 8.5 L6.5 0 L8.5 1.5 L11.5 -2 L7 -7 L3 -8 Q0 -5 -3 -8z" fill="url(#gg)"/><path d="M107 235 L100 243" stroke="#d5d5d7" stroke-width="2.2" stroke-linecap="round"/><path d="M87 237 q6 1 8 6 q3 5 8 5" fill="none" stroke="#f0f0f2" stroke-width="1.1"/>
<path transform="translate(96 275) scale(0.85)" d="M-3 -8 L-7 -7 L-11.5 -2 L-8.5 1.5 L-6.5 0 L-6.5 8.5 L6.5 8.5 L6.5 0 L8.5 1.5 L11.5 -2 L7 -7 L3 -8 Q0 -5 -3 -8z" fill="url(#gg)"/><path d="M107 267 L99 275" stroke="#d5d5d7" stroke-width="2.2" stroke-linecap="round"/><path d="M86 270 q6 1 8 6 q3 5 8 5" fill="none" stroke="#f0f0f2" stroke-width="1.1"/><path d="M110 285 h-6 l6 -6z" fill="#a0a0a3"/>
<path d="M82 313 v9 l2.2 -2.6 L88.5 319z" fill="#a9a9ac"/><rect x="86" y="320" width="8.8" height="8.8" fill="#e8e8e8"/><rect x="86.0" y="322.2" width="2.2" height="2.2" fill="#333"/><rect x="86.0" y="326.6" width="2.2" height="2.2" fill="#333"/><rect x="88.2" y="320.0" width="2.2" height="2.2" fill="#333"/><rect x="88.2" y="324.4" width="2.2" height="2.2" fill="#333"/><rect x="90.4" y="322.2" width="2.2" height="2.2" fill="#333"/><rect x="90.4" y="326.6" width="2.2" height="2.2" fill="#333"/><rect x="92.6" y="320.0" width="2.2" height="2.2" fill="#333"/><rect x="92.6" y="324.4" width="2.2" height="2.2" fill="#333"/><path d="M93 316 l10 -2 q2 6 1 12 l-10 2z" fill="url(#gw)"/>
<path d="M82 345 v9 l2.2 -2.6 L88.5 351z" fill="#a9a9ac"/><path transform="translate(96 356) scale(0.85)" d="M-3 -8 L-7 -7 L-11.5 -2 L-8.5 1.5 L-6.5 0 L-6.5 8.5 L6.5 8.5 L6.5 0 L8.5 1.5 L11.5 -2 L7 -7 L3 -8 Q0 -5 -3 -8z" fill="url(#gg)"/><rect x="92" y="353" width="8" height="8" fill="#e8e8e8"/><rect x="92" y="355" width="2" height="2" fill="#333"/><rect x="92" y="359" width="2" height="2" fill="#333"/><rect x="94" y="353" width="2" height="2" fill="#333"/><rect x="94" y="357" width="2" height="2" fill="#333"/><rect x="96" y="355" width="2" height="2" fill="#333"/><rect x="96" y="359" width="2" height="2" fill="#333"/><rect x="98" y="353" width="2" height="2" fill="#333"/><rect x="98" y="357" width="2" height="2" fill="#333"/>
<path transform="translate(94 387) scale(0.95)" d="M-3 -8 L-7 -7 L-11.5 -2 L-8.5 1.5 L-6.5 0 L-6.5 8.5 L6.5 8.5 L6.5 0 L8.5 1.5 L11.5 -2 L7 -7 L3 -8 Q0 -5 -3 -8z" fill="url(#gg)"/><rect x="90" y="384" width="8.8" height="8.8" fill="#e8e8e8"/><rect x="90.0" y="386.2" width="2.2" height="2.2" fill="#333"/><rect x="90.0" y="390.6" width="2.2" height="2.2" fill="#333"/><rect x="92.2" y="384.0" width="2.2" height="2.2" fill="#333"/><rect x="92.2" y="388.4" width="2.2" height="2.2" fill="#333"/><rect x="94.4" y="386.2" width="2.2" height="2.2" fill="#333"/><rect x="94.4" y="390.6" width="2.2" height="2.2" fill="#333"/><rect x="96.6" y="384.0" width="2.2" height="2.2" fill="#333"/><rect x="96.6" y="388.4" width="2.2" height="2.2" fill="#333"/>
<path d="M82 426 v9 l2.2 -2.6 L88.5 432z" fill="#a9a9ac"/><circle cx="96" cy="436" r="6.5" fill="url(#gg)"/><circle cx="93.8" cy="433.8" r="1.1" fill="#3a3a3d"/><circle cx="93.8" cy="438.2" r="1.1" fill="#3a3a3d"/><circle cx="98.2" cy="433.8" r="1.1" fill="#3a3a3d"/><circle cx="98.2" cy="438.2" r="1.1" fill="#3a3a3d"/><path d="M86 436 h3 M103 436 h3" stroke="#8a8a8d" stroke-width="1"/>
<circle cx="94" cy="466" r="7.5" fill="url(#gg)"/><circle cx="91.8" cy="463.8" r="1.1" fill="#3a3a3d"/><circle cx="91.8" cy="468.2" r="1.1" fill="#3a3a3d"/><circle cx="96.2" cy="463.8" r="1.1" fill="#3a3a3d"/><circle cx="96.2" cy="468.2" r="1.1" fill="#3a3a3d"/><path d="M110 475 h-6 l6 -6z" fill="#a0a0a3"/>
<rect x="82" y="490" width="5" height="4" fill="#a0a0a3"/><path d="M83 490 v-2 a1.5 1.5 0 0 1 3 0 v2" stroke="#a0a0a3" fill="none"/><circle cx="96" cy="500" r="6.5" fill="url(#gg)"/><circle cx="93.8" cy="497.8" r="1.1" fill="#3a3a3d"/><circle cx="93.8" cy="502.2" r="1.1" fill="#3a3a3d"/><circle cx="98.2" cy="497.8" r="1.1" fill="#3a3a3d"/><circle cx="98.2" cy="502.2" r="1.1" fill="#3a3a3d"/><path d="M99 490 h3 a4 4 0 0 1 4 4 v12 a4 4 0 0 1 -4 4 h-3" fill="none" stroke="#dcdcde" stroke-width="1.2"/>
<path d="M82 539 v9 l2.2 -2.6 L88.5 545z" fill="#a9a9ac"/><rect x="89" y="540" width="14" height="14" fill="url(#gg)"/><path d="M96 540 v13" stroke="#e0e0e2" stroke-width="2" stroke-dasharray="1 1"/>
<rect x="88" y="572" width="14" height="15" fill="url(#gg)"/><rect x="93" y="571" width="4" height="8" rx="2" fill="#e6e6e8"/><path d="M95 579 v8" stroke="#e0e0e2" stroke-width="2" stroke-dasharray="1 1"/>
<path d="M82 618 v9 l2.2 -2.6 L88.5 624z" fill="#a9a9ac"/><rect x="88" y="621" width="12" height="13" fill="url(#gg)"/><rect x="100" y="619" width="4" height="16" rx="2" fill="#d9d9db"/>
<rect x="86" y="652" width="12" height="13" fill="url(#gg)"/><rect x="98" y="650" width="4" height="16" rx="2" fill="#d9d9db"/>
<path d="M82 699 v9 l2.2 -2.6 L88.5 705z" fill="#a9a9ac"/><rect x="88" y="704" width="10" height="10" fill="url(#gg)"/><rect x="99" y="702" width="3.5" height="14" fill="#dedee0"/>
<rect x="84" y="732" width="15" height="15" fill="url(#gg)"/><rect x="100" y="730" width="4" height="18" fill="#dedee0"/>
<path d="M91 780 v8 q0 5 4 5 q4 0 4 -5 v-8 h-2 v7 h-4 v-7z" fill="url(#gw)"/><path d="M82 788 h5 M106 788 h-5" stroke="#d0d0d2" stroke-width="1.2"/><path d="M88 788 l-2 -2 v4z M100 788 l2 -2 v4z" fill="#d0d0d2"/>
<rect x="1498" y="59" width="28" height="2" fill="#151517"/>
<rect x="1498" y="396" width="28" height="2" fill="#151517"/>
<rect x="1498" y="443.5" width="28" height="2" fill="#151517"/>
<rect x="1498" y="523" width="28" height="2" fill="#151517"/>
<rect x="1498" y="603.5" width="28" height="2" fill="#151517"/>
<rect x="1498" y="651" width="28" height="2" fill="#151517"/>
<rect x="1536" y="59" width="28" height="2" fill="#151517"/>
<rect x="1536" y="204" width="28" height="2" fill="#151517"/>
<rect x="1536" y="252" width="28" height="2" fill="#151517"/>
<rect x="1536" y="299" width="28" height="2" fill="#151517"/>
<rect x="1536" y="411" width="28" height="2" fill="#151517"/>
<rect x="1536" y="492" width="28" height="2" fill="#151517"/>
<rect x="1536" y="571" width="28" height="2" fill="#151517"/>
<rect x="1536" y="620" width="28" height="2" fill="#151517"/>
<rect x="1536" y="667" width="28" height="2" fill="#151517"/>
<rect x="1496" y="69" width="32" height="28" rx="5" fill="#121214" stroke="#0a0a0a" stroke-width="1"/>
<path d="M1500 73 v9 l2.2 -2.6 L1506.5 79z" fill="#d2d2d4"/><path d="M1506 91 L1523 77 V91z" fill="#2e5f9c" stroke="#3e8ff0" stroke-width="1.2"/>
<path d="M1500 106 v9 l2.2 -2.6 L1506.5 112z" fill="#a9a9ac"/><path d="M1506 121 L1520 108 L1520 121z" fill="none" stroke="#cfcfd1" stroke-width="1"/><circle cx="1506" cy="121" r="1.6" fill="#e8e8ea"/><circle cx="1520" cy="108" r="1.6" fill="#e8e8ea"/><circle cx="1520" cy="121" r="1.6" fill="#e8e8ea"/><path d="M1526 126 h-6 l6 -6z" fill="#a0a0a3"/>
<path d="M1503 139 h7 l9 8 l-9 8 h-7z" fill="url(#gg)"/><path d="M1510 139 l9 8 l-9 8" stroke="#d8d8da" fill="none"/><circle cx="1519" cy="147" r="1.8" fill="#e8e8ea"/><circle cx="1510" cy="155" r="1.8" fill="#e8e8ea"/><path d="M1526 158 h-6 l6 -6z" fill="#a0a0a3"/>
<path d="M1502 170 h10 q2 6 10 7 v10 h-20z" fill="url(#gg)"/><path d="M1526 190 h-6 l6 -6z" fill="#a0a0a3"/>
<rect x="1502" y="203" width="20" height="17" fill="url(#gg)"/><path d="M1505 206 h8 l6 5 v6 h-14z" fill="none" stroke="#d0d0d2" stroke-width="1"/><path d="M1526 222 h-6 l6 -6z" fill="#a0a0a3"/>
<path d="M1502 235 l5 -2 l3 3 h4 l3 -3 l5 2 l-1 8 l1 9 h-20 l1 -9z" fill="url(#gg)"/><path d="M1510 237 q4 2 0 4 q-4 2 0 4 q4 2 0 4 q-4 2 0 4" stroke="#eee" fill="none"/>
<rect x="1502" y="267" width="20" height="16" fill="url(#gg)"/><path d="M1505 270 h8 l6 5 v6 h-14z" fill="none" stroke="#dedee0" stroke-width="1" stroke-dasharray="1 1.5"/><path d="M1526 286 h-6 l6 -6z" fill="#a0a0a3"/>
<rect x="1502" y="302" width="12" height="14" fill="url(#gg)"/><path d="M1512 298 h11 v7 l-5 5 h-6z" fill="url(#gw)"/><path d="M1505 306 h5 v4 l-2.5 2 l-2.5 -2z" fill="none" stroke="#222" stroke-width="1"/>
<path d="M1500 328 v9 l2.2 -2.6 L1506.5 334z" fill="#a9a9ac"/><path d="M1506 348 l18 -15 M1506 333 l18 15" stroke="#c8c8ca" stroke-width="1.2"/><circle cx="1514" cy="340" r="2.2" fill="#e0e0e2"/>
<path d="M1500 361 v9 l2.2 -2.6 L1506.5 367z" fill="#a9a9ac"/><path d="M1511 363 l5 -3 l2 1 q0 3 3 4 l-1 7 l1 6 h-10z" fill="none" stroke="#dcdcde" stroke-width="1.4"/>
<rect x="1503" y="410" width="16" height="16" fill="url(#gg)"/><rect x="1513" y="413" width="9" height="10" fill="#a8a8ab"/><path d="M1514 414 v8" stroke="#eee" stroke-width="1"/><circle cx="1514" cy="413" r="1.5" fill="#e8e8ea"/><circle cx="1514" cy="423" r="1.5" fill="#e8e8ea"/>
<path d="M1500 457 v9 l2.2 -2.6 L1506.5 463z" fill="#a9a9ac"/><path d="M1512 458 v18" stroke="#d8d8da" stroke-width="1"/><rect x="1515" y="457" width="7" height="20" fill="url(#gg)"/><circle cx="1512" cy="458" r="1.3" fill="#e8e8ea"/><circle cx="1512" cy="476" r="1.3" fill="#e8e8ea"/>
<path d="M1502 492 h20" stroke="#d8d8da" stroke-width="1"/><circle cx="1502" cy="492" r="1.3" fill="#e8e8ea"/><circle cx="1522" cy="492" r="1.3" fill="#e8e8ea"/><rect x="1501" y="496" width="22" height="7" fill="url(#gg)"/>
<path d="M1500 538 v9 l2.2 -2.6 L1506.5 544z" fill="#a9a9ac"/><text x="1505" y="556" font-family="Liberation Serif" font-size="20" fill="#d8d8da">A</text>
<text x="1503" y="589" font-family="Liberation Serif" font-size="21" fill="#d8d8da">A</text><path d="M1526 591 h-6 l6 -6z" fill="#a0a0a3"/>
<rect x="1502" y="618" width="21" height="17" fill="none" stroke="#5a5a5d" stroke-width="1.5"/><path d="M1507 620 v13 M1512.5 620 v13 M1518 620 v13" stroke="#8a8a8d" stroke-width="1.2" stroke-dasharray="1.2 1.3"/><path d="M1526 637 h-6 l6 -6z" fill="#a0a0a3"/>
<path d="M1500 666 v9 l2.2 -2.6 L1506.5 672z" fill="#a9a9ac"/><path d="M1506 672 l4 -3 h3 l3 2 v12 h-10z" fill="#6d6d70"/><path d="M1510 674 l4 -3 h3 l3 2 v12 h-10z" fill="#8a8a8d"/><path d="M1507 686 L1521 676" stroke="#e8e8ea" stroke-width="1.2" stroke-linecap="round"/><path d="M1526 689 h-6 l6 -6z" fill="#a0a0a3"/>
<circle cx="1508" cy="698" r="3" fill="#6a6a6d"/><path d="M1503 702 h10 v14 h-10z" fill="#6a6a6d"/><path d="M1511 704 l4 -3 h3 l3 2 v14 h-10z" fill="url(#gw)"/>
<path d="M1538 73 v9 l2.2 -2.6 L1544.5 79z" fill="#a9a9ac"/><path transform="translate(1553 83.5) scale(0.920)" d="M-7 -4.5 q0 -1.5 1.5 -1.5 h5 v-1 h1.2 v1 h2.3 v-1.2 h-0.8 v-1.2 h3.2 v1.2 h-0.8 v1.2 h1.2 q1 0 1 1 v11 h-7 v-5.5 h-4.3 v3.7 h-1.4 v-3.7 h-1.1z" fill="url(#gg)"/><rect x="1546" y="90.5" width="16" height="1.5" fill="#9a9a9d"/>
<path transform="translate(1553 112.5) scale(0.920)" d="M-7 -4.5 q0 -1.5 1.5 -1.5 h5 v-1 h1.2 v1 h2.3 v-1.2 h-0.8 v-1.2 h3.2 v1.2 h-0.8 v1.2 h1.2 q1 0 1 1 v11 h-7 v-5.5 h-4.3 v3.7 h-1.4 v-3.7 h-1.1z" fill="url(#gg)"/><path d="M1541 123 h16" stroke="#d8d8da" stroke-width="1.2"/><circle cx="1541" cy="123" r="1.6" fill="#e8e8ea"/><circle cx="1557" cy="123" r="1.6" fill="#e8e8ea"/><path d="M1564 126 h-6 l6 -6z" fill="#a0a0a3"/>
<path transform="translate(1553 144.5) scale(0.920)" d="M-7 -4.5 q0 -1.5 1.5 -1.5 h5 v-1 h1.2 v1 h2.3 v-1.2 h-0.8 v-1.2 h3.2 v1.2 h-0.8 v1.2 h1.2 q1 0 1 1 v11 h-7 v-5.5 h-4.3 v3.7 h-1.4 v-3.7 h-1.1z" fill="url(#gg)"/><path d="M1540 158 q5 -4 9 -1 q5 3 10 -1" fill="none" stroke="#cfcfd2" stroke-width="1.3"/><path d="M1564 158 h-6 l6 -6z" fill="#a0a0a3"/>
<circle cx="1541" cy="172" r="2.6" fill="none" stroke="#aaa" stroke-width="1"/><path transform="translate(1554 178.5) scale(0.862)" d="M-7 -4.5 q0 -1.5 1.5 -1.5 h5 v-1 h1.2 v1 h2.3 v-1.2 h-0.8 v-1.2 h3.2 v1.2 h-0.8 v1.2 h1.2 q1 0 1 1 v11 h-7 v-5.5 h-4.3 v3.7 h-1.4 v-3.7 h-1.1z" fill="url(#gg)"/><rect x="1546" y="186.5" width="15" height="1.5" fill="#9a9a9d"/>
<path d="M1537 232 q4 -10 16 -10 h8 l1 10z" fill="url(#gg)"/><path d="M1537 234 h25 M1537 237 h25" stroke="#555" stroke-width="1"/>
<path d="M1538 266 v9 l2.2 -2.6 L1544.5 272z" fill="#a9a9ac"/><path transform="translate(1553 276) scale(0.85)" d="M-3 -8 L-7 -7 L-11.5 -2 L-8.5 1.5 L-6.5 0 L-6.5 8.5 L6.5 8.5 L6.5 0 L8.5 1.5 L11.5 -2 L7 -7 L3 -8 Q0 -5 -3 -8z" fill="url(#gg)"/>
<path d="M1538 313 v9 l2.2 -2.6 L1544.5 319z" fill="#a9a9ac"/><rect x="1542" y="320" width="8.8" height="8.8" fill="#e8e8e8"/><rect x="1542.0" y="322.2" width="2.2" height="2.2" fill="#333"/><rect x="1542.0" y="326.6" width="2.2" height="2.2" fill="#333"/><rect x="1544.2" y="320.0" width="2.2" height="2.2" fill="#333"/><rect x="1544.2" y="324.4" width="2.2" height="2.2" fill="#333"/><rect x="1546.4" y="322.2" width="2.2" height="2.2" fill="#333"/><rect x="1546.4" y="326.6" width="2.2" height="2.2" fill="#333"/><rect x="1548.6" y="320.0" width="2.2" height="2.2" fill="#333"/><rect x="1548.6" y="324.4" width="2.2" height="2.2" fill="#333"/><path d="M1549 316 l10 -2 q2 6 1 12 l-10 2z" fill="url(#gw)"/>
<path d="M1538 345 v9 l2.2 -2.6 L1544.5 351z" fill="#a9a9ac"/><path transform="translate(1553 356) scale(0.85)" d="M-3 -8 L-7 -7 L-11.5 -2 L-8.5 1.5 L-6.5 0 L-6.5 8.5 L6.5 8.5 L6.5 0 L8.5 1.5 L11.5 -2 L7 -7 L3 -8 Q0 -5 -3 -8z" fill="url(#gg)"/><rect x="1549" y="353" width="8" height="8" fill="#e8e8e8"/><rect x="1549" y="355" width="2" height="2" fill="#333"/><rect x="1549" y="359" width="2" height="2" fill="#333"/><rect x="1551" y="353" width="2" height="2" fill="#333"/><rect x="1551" y="357" width="2" height="2" fill="#333"/><rect x="1553" y="355" width="2" height="2" fill="#333"/><rect x="1553" y="359" width="2" height="2" fill="#333"/><rect x="1555" y="353" width="2" height="2" fill="#333"/><rect x="1555" y="357" width="2" height="2" fill="#333"/>
<path transform="translate(1551 387) scale(0.95)" d="M-3 -8 L-7 -7 L-11.5 -2 L-8.5 1.5 L-6.5 0 L-6.5 8.5 L6.5 8.5 L6.5 0 L8.5 1.5 L11.5 -2 L7 -7 L3 -8 Q0 -5 -3 -8z" fill="url(#gg)"/><rect x="1547" y="384" width="8.8" height="8.8" fill="#e8e8e8"/><rect x="1547.0" y="386.2" width="2.2" height="2.2" fill="#333"/><rect x="1547.0" y="390.6" width="2.2" height="2.2" fill="#333"/><rect x="1549.2" y="384.0" width="2.2" height="2.2" fill="#333"/><rect x="1549.2" y="388.4" width="2.2" height="2.2" fill="#333"/><rect x="1551.4" y="386.2" width="2.2" height="2.2" fill="#333"/><rect x="1551.4" y="390.6" width="2.2" height="2.2" fill="#333"/><rect x="1553.6" y="384.0" width="2.2" height="2.2" fill="#333"/><rect x="1553.6" y="388.4" width="2.2" height="2.2" fill="#333"/>
<path d="M1538 425 v9 l2.2 -2.6 L1544.5 431z" fill="#a9a9ac"/><path d="M1544 442 l16 -14" stroke="#e8e8ea" stroke-width="1.6" stroke-dasharray="3 2"/>
<path d="M1539 460 h22" stroke="#e8e8ea" stroke-width="1.6" stroke-dasharray="3 2"/><path d="M1540 468 h20" stroke="#d8d8da" stroke-width="1"/><circle cx="1540" cy="468" r="1.4" fill="#e8e8ea"/><circle cx="1560" cy="468" r="1.4" fill="#e8e8ea"/><path d="M1564 474 h-6 l6 -6z" fill="#a0a0a3"/>
<path d="M1538 505 v9 l2.2 -2.6 L1544.5 511z" fill="#a9a9ac"/><path d="M1545 506 q6 1 0 3 q-6 2 0 3 q6 1 0 3 q-6 2 0 3 q6 1 0 3" stroke="#dedee0" fill="none" stroke-width="1.3"/><path d="M1559 506 v16" stroke="#d8d8da"/>
<path d="M1540 542 q2 -4 3 0 q2 4 3 0 q2 -4 3 0 q2 4 3 0 q2 -4 3 0 q2 4 3 0" fill="none" stroke="#dedee0" stroke-width="1.2"/><path d="M1540 550 h19" stroke="#d8d8da"/><circle cx="1540" cy="550" r="1.3" fill="#e8e8ea"/><circle cx="1559" cy="550" r="1.3" fill="#e8e8ea"/><path d="M1564 554 h-6 l6 -6z" fill="#a0a0a3"/>
<path d="M1540 590 l5 -4 l4 1 v12 h-9z" fill="#6a6a6d"/><path d="M1549 586 l5 -4 l5 1 v14 h-10z" fill="url(#gg)"/><circle cx="1549" cy="594" r="3.5" fill="none" stroke="#eee" stroke-width="1.2"/><path d="M1547 594 h4 M1549 592 v4 M1541 598 l16 -9" stroke="#eee" stroke-width="1"/>
<path d="M1542 637 l6 -3 l2 2 l2 -2 l6 3 v14 h-16z" fill="url(#gw)"/><path d="M1542 640 h16 M1542 644 h16 M1542 648 h16" stroke="#252528" stroke-width="1.3"/><path d="M1550 636 v15" stroke="#252528"/>
<path d="M1577 41.2 h5 v-3 l4 4.3 l-4 4.3 v-3 h-5z" fill="#ececee"/><rect x="1588" y="36" width="1" height="13" fill="#444447"/>
<rect x="1903" y="37" width="7" height="6" rx="1.5" fill="none" stroke="#bdbdc0" stroke-width="1.2"/><path d="M1903 40 h-1.5 a1.5 1.5 0 0 0 -1.5 1.5 v3 a1.5 1.5 0 0 0 1.5 1.5 h4.5 a1.5 1.5 0 0 0 1.5 -1.5 v-1.5" fill="none" stroke="#bdbdc0" stroke-width="1.2"/>
<rect x="1558" y="37" width="7" height="6" rx="1.5" fill="none" stroke="#bdbdc0" stroke-width="1.2"/><path d="M1558 40 h-1.5 a1.5 1.5 0 0 0 -1.5 1.5 v3 a1.5 1.5 0 0 0 1.5 1.5 h4.5 a1.5 1.5 0 0 0 1.5 -1.5 v-1.5" fill="none" stroke="#bdbdc0" stroke-width="1.2"/>
<rect x="789" y="37" width="7" height="6" rx="1.5" fill="none" stroke="#bdbdc0" stroke-width="1.2"/><path d="M789 40 h-1.5 a1.5 1.5 0 0 0 -1.5 1.5 v3 a1.5 1.5 0 0 0 1.5 1.5 h4.5 a1.5 1.5 0 0 0 1.5 -1.5 v-1.5" fill="none" stroke="#bdbdc0" stroke-width="1.2"/>
<path d="M1577 401.2 h5 v-3 l4 4.3 l-4 4.3 v-3 h-5z" fill="#ececee"/><rect x="1588" y="396" width="1" height="13" fill="#444447"/>
<rect x="1903" y="397" width="7" height="6" rx="1.5" fill="none" stroke="#bdbdc0" stroke-width="1.2"/><path d="M1903 400 h-1.5 a1.5 1.5 0 0 0 -1.5 1.5 v3 a1.5 1.5 0 0 0 1.5 1.5 h4.5 a1.5 1.5 0 0 0 1.5 -1.5 v-1.5" fill="none" stroke="#bdbdc0" stroke-width="1.2"/>
<rect x="1574" y="80" width="309" height="2" fill="#333336"/><rect x="1606" y="80" width="34" height="2" fill="#5ab0f5"/>
<rect x="1883" y="52" width="31" height="30" fill="#2a2a2d"/>
<path d="M1889 67 l5 -3.5 v7z" fill="#4a4a4d"/><path d="M1908 67 l-5 -3.5 v7z" fill="#f0f0f2"/>
<rect x="1585" y="57.0" width="2.2" height="2.2" fill="#f2f2f4"/><rect x="1589" y="57.0" width="9" height="2.2" fill="#f2f2f4"/>
<rect x="1585" y="60.9" width="2.2" height="2.2" fill="#f2f2f4"/><rect x="1589" y="60.9" width="9" height="2.2" fill="#f2f2f4"/>
<rect x="1585" y="64.8" width="2.2" height="2.2" fill="#f2f2f4"/><rect x="1589" y="64.8" width="9" height="2.2" fill="#f2f2f4"/>
<rect x="1585" y="68.7" width="2.2" height="2.2" fill="#f2f2f4"/><rect x="1589" y="68.7" width="9" height="2.2" fill="#f2f2f4"/>
<path d="M1616 61 l6 -2 l2 9 q-4 2 -7 1z" fill="#3f6f9e"/><path d="M1619 58 q5 -3 10 -2 q3 1 2 4 l-3 10 q-4 -1 -8 1z" fill="#6ab4f6"/>
<rect x="1648" y="56" width="16" height="16" fill="#f4f4f4"/><rect x="1648" y="60" width="4" height="4" fill="#222"/><rect x="1648" y="68" width="4" height="4" fill="#222"/><rect x="1652" y="56" width="4" height="4" fill="#222"/><rect x="1652" y="64" width="4" height="4" fill="#222"/><rect x="1656" y="60" width="4" height="4" fill="#222"/><rect x="1656" y="68" width="4" height="4" fill="#222"/><rect x="1660" y="56" width="4" height="4" fill="#222"/><rect x="1660" y="64" width="4" height="4" fill="#222"/>
<rect x="1648" y="56" width="16" height="16" fill="none" stroke="#f4f4f4" stroke-width="1"/>
<circle cx="1688" cy="64" r="8" fill="#f6f6f8"/><circle cx="1685.5" cy="61.5" r="1.3" fill="#252528"/><circle cx="1685.5" cy="66.5" r="1.3" fill="#252528"/><circle cx="1690.5" cy="61.5" r="1.3" fill="#252528"/><circle cx="1690.5" cy="66.5" r="1.3" fill="#252528"/>
<circle cx="1714" cy="64" r="2.2" fill="#f2f2f4"/><rect x="1714" y="63" width="14" height="2.2" fill="#f2f2f4"/>
<path d="M1744.5 71.5 l15.5 -15" stroke="#f2f2f4" stroke-width="2.6" stroke-dasharray="1.8 5.6" stroke-linecap="round"/>
<polyline points="1775.95,65.70 1775.78,65.84 1775.65,66.04 1775.58,66.31 1775.56,66.61 1775.60,66.96 1775.71,67.35 1775.87,67.74 1776.09,68.15 1776.37,68.56 1776.70,68.94 1777.08,69.31 1777.50,69.63 1777.95,69.91 1778.43,70.13 1778.93,70.30 1779.43,70.39 1779.92,70.41 1780.41,70.37 1780.87,70.24 1781.30,70.05 1781.70,69.78 1782.05,69.46 1782.35,69.07 1782.59,68.64 1782.77,68.16 1782.89,67.65 1782.96,67.13 1782.96,66.60 1782.91,66.07 1782.80,65.56 1782.64,65.07 1782.45,64.62 1782.22,64.22 1781.97,63.87 1781.70,63.58 1781.42,63.36 1781.15,63.21 1780.89,63.13 1780.65,63.13 1780.45,63.20 1780.28,63.34 1780.15,63.54 1780.08,63.81 1780.06,64.11 1780.10,64.46 1780.21,64.85 1780.37,65.24 1780.59,65.65 1780.87,66.06 1781.20,66.44 1781.58,66.81 1782.00,67.13 1782.45,67.41 1782.93,67.63 1783.43,67.80 1783.93,67.89 1784.42,67.91 1784.91,67.87 1785.37,67.74 1785.80,67.55 1786.20,67.28 1786.55,66.96 1786.85,66.57 1787.09,66.14 1787.27,65.66 1787.39,65.15 1787.46,64.63 1787.46,64.10 1787.41,63.57 1787.30,63.06 1787.14,62.57 1786.95,62.12 1786.72,61.72 1786.47,61.37 1786.20,61.08 1785.92,60.86 1785.65,60.71 1785.39,60.63 1785.15,60.63 1784.95,60.70 1784.78,60.84 1784.65,61.04 1784.58,61.31 1784.56,61.61 1784.60,61.96 1784.71,62.35 1784.87,62.74 1785.09,63.15 1785.37,63.56 1785.70,63.94 1786.08,64.31 1786.50,64.63 1786.95,64.91 1787.43,65.13 1787.93,65.30 1788.43,65.39 1788.92,65.41 1789.41,65.37 1789.87,65.24 1790.30,65.05 1790.70,64.78 1791.05,64.46 1791.35,64.07 1791.59,63.64 1791.77,63.16 1791.89,62.65 1791.96,62.13 1791.96,61.60 1791.91,61.07 1791.80,60.56 1791.64,60.07 1791.45,59.62 1791.22,59.22 1790.97,58.87 1790.70,58.58 1790.42,58.36 1790.15,58.21 1789.89,58.13 1789.65,58.13 1789.45,58.20" fill="none" stroke="#f0f0f2" stroke-width="1.5" stroke-linejoin="round"/>
<path d="M1808 56 l7 3 l7 -3 v10 l-7 -3 l-7 3z" fill="#f0f0f2"/><path d="M1810 72 l3 -7 l2 7 M1817 72 l2 -7 l3 7" fill="#b0b0b3" stroke="#b0b0b3"/>
<path d="M1843 58 q5 -3 10 0 l-1 14 h-8z" fill="#f0f0f2"/><rect x="1846.5" y="59" width="3" height="7" rx="1" fill="#252528"/><rect x="1845" y="68" width="6" height="2.5" fill="#252528"/>
<path d="M1872 62 l4 -3 h4 v13 h-8z" fill="#f4f4f4"/><path d="M1881 60 v12" stroke="#f4f4f4" stroke-width="1.2"/>
<path d="M1818 107 h4 l1 1 h7 v9 h-12z" fill="#e8e8ea"/><path d="M1826 105 v6 M1823 108 h6" stroke="#252528" stroke-width="2.2"/><path d="M1826 105.5 v5 M1823.5 108 h5" stroke="#e8e8ea" stroke-width="1.2"/>
<rect x="1835" y="98" width="1" height="26" fill="#39393c"/>
<path d="M1843 115 q1 -9 5.5 -9 q4.5 0 5.5 9 q-2 -1 -3 0 q-2 -1 -5 0 q-1 -1 -3 0z" fill="#cfcfd2"/>
<rect x="1584" y="130" width="322" height="1" fill="#3a3a3d"/>
<rect x="1584" y="131" width="330" height="20" fill="#1e1e21"/>
<path d="M1597 139 h6 l-3 4z" fill="#f0f0f2"/>
<path d="M1762 147 l1.5 -4 l8 -8 q2 0 2.5 2 l-8 8z" fill="#f0f0f2"/>
<path d="M1858 141 h11 M1863.5 135.5 v11" stroke="#f6f6f8" stroke-width="2"/>
<path d="M1877 137 h4 l1 1 h7 v9 h-12z" fill="#f0f0f2"/><path d="M1877 140 h12" stroke="#1e1e21" stroke-width=".8"/>
<rect x="1607" y="155" width="37" height="37" fill="#ffffff"/>
<path d="M1590 173 l3 3.5 l6 -7" fill="none" stroke="#5ab0f5" stroke-width="1.8"/>
<rect x="1885.0" y="172" width="2" height="2" fill="#e6e6e8"/><rect x="1888.2" y="172" width="2" height="2" fill="#e6e6e8"/><rect x="1891.4" y="172" width="2" height="2" fill="#e6e6e8"/>
<rect x="1589" y="194" width="309" height="1" fill="#38383b"/>
<rect x="261.4" y="900" width="1" height="7" fill="#6e6e72"/>
<rect x="272.9" y="903" width="1" height="4" fill="#5e5e62"/>
<rect x="284.4" y="900" width="1" height="7" fill="#6e6e72"/>
<rect x="296.0" y="903" width="1" height="4" fill="#5e5e62"/>
<rect x="307.5" y="900" width="1" height="7" fill="#6e6e72"/>
<rect x="319.0" y="903" width="1" height="4" fill="#5e5e62"/>
<rect x="330.6" y="900" width="1" height="7" fill="#6e6e72"/>
<rect x="342.1" y="903" width="1" height="4" fill="#5e5e62"/>
<rect x="353.6" y="900" width="1" height="7" fill="#6e6e72"/>
<rect x="365.2" y="903" width="1" height="4" fill="#5e5e62"/>
<rect x="376.7" y="900" width="1" height="7" fill="#6e6e72"/>
<rect x="388.2" y="903" width="1" height="4" fill="#5e5e62"/>
<rect x="399.7" y="900" width="1" height="7" fill="#6e6e72"/>
<rect x="411.3" y="903" width="1" height="4" fill="#5e5e62"/>
<rect x="422.8" y="900" width="1" height="7" fill="#6e6e72"/>
<rect x="434.3" y="903" width="1" height="4" fill="#5e5e62"/>
<rect x="445.9" y="900" width="1" height="7" fill="#6e6e72"/>
<rect x="457.4" y="903" width="1" height="4" fill="#5e5e62"/>
<rect x="468.9" y="900" width="1" height="7" fill="#6e6e72"/>
<rect x="480.4" y="903" width="1" height="4" fill="#5e5e62"/>
<rect x="492.0" y="900" width="1" height="7" fill="#6e6e72"/>
<rect x="503.5" y="903" width="1" height="4" fill="#5e5e62"/>
<rect x="515.0" y="900" width="1" height="7" fill="#6e6e72"/>
<rect x="526.6" y="903" width="1" height="4" fill="#5e5e62"/>
<rect x="538.1" y="900" width="1" height="7" fill="#6e6e72"/>
<rect x="549.6" y="903" width="1" height="4" fill="#5e5e62"/>
<rect x="561.2" y="900" width="1" height="7" fill="#6e6e72"/>
<rect x="572.7" y="903" width="1" height="4" fill="#5e5e62"/>
<rect x="584.2" y="900" width="1" height="7" fill="#6e6e72"/>
<rect x="595.8" y="903" width="1" height="4" fill="#5e5e62"/>
<rect x="607.3" y="900" width="1" height="7" fill="#6e6e72"/>
<rect x="618.8" y="903" width="1" height="4" fill="#5e5e62"/>
<rect x="630.3" y="900" width="1" height="7" fill="#6e6e72"/>
<rect x="641.9" y="903" width="1" height="4" fill="#5e5e62"/>
<rect x="653.4" y="900" width="1" height="7" fill="#6e6e72"/>
<rect x="664.9" y="903" width="1" height="4" fill="#5e5e62"/>
<rect x="676.5" y="900" width="1" height="7" fill="#6e6e72"/>
<rect x="688.0" y="903" width="1" height="4" fill="#5e5e62"/>
<rect x="699.5" y="900" width="1" height="7" fill="#6e6e72"/>
<rect x="711.0" y="903" width="1" height="4" fill="#5e5e62"/>
<rect x="722.6" y="900" width="1" height="7" fill="#6e6e72"/>
<rect x="734.1" y="903" width="1" height="4" fill="#5e5e62"/>
<rect x="745.6" y="900" width="1" height="7" fill="#6e6e72"/>
<rect x="757.2" y="903" width="1" height="4" fill="#5e5e62"/>
<rect x="768.7" y="900" width="1" height="7" fill="#6e6e72"/>
<rect x="780.2" y="903" width="1" height="4" fill="#5e5e62"/>
<rect x="791.8" y="900" width="1" height="7" fill="#6e6e72"/>
<rect x="803.3" y="903" width="1" height="4" fill="#5e5e62"/>
<rect x="814.8" y="900" width="1" height="7" fill="#6e6e72"/>
<rect x="826.3" y="903" width="1" height="4" fill="#5e5e62"/>
<rect x="837.9" y="900" width="1" height="7" fill="#6e6e72"/>
<rect x="849.4" y="903" width="1" height="4" fill="#5e5e62"/>
<rect x="860.9" y="900" width="1" height="7" fill="#6e6e72"/>
<rect x="872.5" y="903" width="1" height="4" fill="#5e5e62"/>
<rect x="884.0" y="900" width="1" height="7" fill="#6e6e72"/>
<rect x="895.5" y="903" width="1" height="4" fill="#5e5e62"/>
<rect x="907.1" y="900" width="1" height="7" fill="#6e6e72"/>
<rect x="918.6" y="903" width="1" height="4" fill="#5e5e62"/>
<rect x="930.1" y="900" width="1" height="7" fill="#6e6e72"/>
<rect x="941.7" y="903" width="1" height="4" fill="#5e5e62"/>
<rect x="953.2" y="900" width="1" height="7" fill="#6e6e72"/>
<rect x="964.7" y="903" width="1" height="4" fill="#5e5e62"/>
<rect x="976.2" y="900" width="1" height="7" fill="#6e6e72"/>
<rect x="987.8" y="903" width="1" height="4" fill="#5e5e62"/>
<rect x="999.3" y="900" width="1" height="7" fill="#6e6e72"/>
<rect x="1010.8" y="903" width="1" height="4" fill="#5e5e62"/>
<rect x="1022.4" y="900" width="1" height="7" fill="#6e6e72"/>
<rect x="1033.9" y="903" width="1" height="4" fill="#5e5e62"/>
<rect x="1045.4" y="900" width="1" height="7" fill="#6e6e72"/>
<rect x="1057.0" y="903" width="1" height="4" fill="#5e5e62"/>
<rect x="1068.5" y="900" width="1" height="7" fill="#6e6e72"/>
<rect x="1080.0" y="903" width="1" height="4" fill="#5e5e62"/>
<rect x="1091.5" y="900" width="1" height="7" fill="#6e6e72"/>
<rect x="1103.1" y="903" width="1" height="4" fill="#5e5e62"/>
<rect x="1114.6" y="900" width="1" height="7" fill="#6e6e72"/>
<rect x="1126.1" y="903" width="1" height="4" fill="#5e5e62"/>
<rect x="1137.7" y="900" width="1" height="7" fill="#6e6e72"/>
<rect x="1149.2" y="903" width="1" height="4" fill="#5e5e62"/>
<rect x="1160.7" y="900" width="1" height="7" fill="#6e6e72"/>
<rect x="1172.2" y="903" width="1" height="4" fill="#5e5e62"/>
<rect x="1183.8" y="900" width="1" height="7" fill="#6e6e72"/>
<rect x="1195.3" y="903" width="1" height="4" fill="#5e5e62"/>
<rect x="1206.8" y="900" width="1" height="7" fill="#6e6e72"/>
<rect x="1218.4" y="903" width="1" height="4" fill="#5e5e62"/>
<rect x="1229.9" y="900" width="1" height="7" fill="#6e6e72"/>
<rect x="1241.4" y="903" width="1" height="4" fill="#5e5e62"/>
<rect x="1253.0" y="900" width="1" height="7" fill="#6e6e72"/>
<rect x="1264.5" y="903" width="1" height="4" fill="#5e5e62"/>
<rect x="1276.0" y="900" width="1" height="7" fill="#6e6e72"/>
<rect x="1287.5" y="903" width="1" height="4" fill="#5e5e62"/>
<rect x="1299.1" y="900" width="1" height="7" fill="#6e6e72"/>
<rect x="1310.6" y="903" width="1" height="4" fill="#5e5e62"/>
<rect x="1322.1" y="900" width="1" height="7" fill="#6e6e72"/>
<rect x="1333.7" y="903" width="1" height="4" fill="#5e5e62"/>
<rect x="1345.2" y="900" width="1" height="7" fill="#6e6e72"/>
<rect x="1356.7" y="903" width="1" height="4" fill="#5e5e62"/>
<rect x="1368.3" y="900" width="1" height="7" fill="#6e6e72"/>
<rect x="1379.8" y="903" width="1" height="4" fill="#5e5e62"/>
<rect x="1391.3" y="900" width="1" height="7" fill="#6e6e72"/>
<rect x="1402.8" y="903" width="1" height="4" fill="#5e5e62"/>
<rect x="1414.4" y="900" width="1" height="7" fill="#6e6e72"/>
<rect x="1425.9" y="903" width="1" height="4" fill="#5e5e62"/>
<rect x="1437.4" y="900" width="1" height="7" fill="#6e6e72"/>
<rect x="1449.0" y="903" width="1" height="4" fill="#5e5e62"/>
<rect x="1460.5" y="900" width="1" height="7" fill="#6e6e72"/>
<rect x="1472.0" y="903" width="1" height="4" fill="#5e5e62"/>
<rect x="1483.6" y="900" width="1" height="7" fill="#6e6e72"/>
<rect x="1495.1" y="903" width="1" height="4" fill="#5e5e62"/>
<rect x="1506.6" y="900" width="1" height="7" fill="#6e6e72"/>
<rect x="1518.1" y="903" width="1" height="4" fill="#5e5e62"/>
<rect x="1529.7" y="900" width="1" height="7" fill="#6e6e72"/>
<rect x="1541.2" y="903" width="1" height="4" fill="#5e5e62"/>
<rect x="1552.7" y="900" width="1" height="7" fill="#6e6e72"/>
<rect x="1564.3" y="903" width="1" height="4" fill="#5e5e62"/>
<rect x="1575.8" y="900" width="1" height="7" fill="#6e6e72"/>
<rect x="1587.3" y="903" width="1" height="4" fill="#5e5e62"/>
<rect x="1598.9" y="900" width="1" height="7" fill="#6e6e72"/>
<rect x="1610.4" y="903" width="1" height="4" fill="#5e5e62"/>
<rect x="1621.9" y="900" width="1" height="7" fill="#6e6e72"/>
<rect x="584.0" y="902" width="1.5" height="61" fill="#f4f4f6"/>
<rect x="583.7" y="907" width="2" height="6" fill="#8a8a8d"/>
<rect x="418.3" y="907" width="6" height="6" rx="1.5" fill="#a8a8ab"/>
<rect x="769.2" y="907" width="3" height="6" rx="1" fill="#a8a8ab"/>
<rect x="551" y="970" width="3" height="15" rx="1.5" fill="#8e8e92"/><rect x="1247" y="970" width="3" height="15" rx="1.5" fill="#8e8e92"/>
<path d="M1613 972 v12 M1627 972 v12 M1615 978 h10" stroke="#b8b8bb" stroke-width="1"/><path d="M1614 978 l3 -2.5 v5z M1626 978 l-3 -2.5 v5z" fill="#b8b8bb"/>
<path d="M1901 838 l8 8 M1909 838 l-8 8" stroke="#f2f2f4" stroke-width="2"/>
<rect x="1885" y="838" width="7" height="6" rx="1.5" fill="none" stroke="#bdbdc0" stroke-width="1.2"/><path d="M1885 841 h-1.5 a1.5 1.5 0 0 0 -1.5 1.5 v3 a1.5 1.5 0 0 0 1.5 1.5 h4.5 a1.5 1.5 0 0 0 1.5 -1.5 v-1.5" fill="none" stroke="#bdbdc0" stroke-width="1.2"/>
<path d="M1861.5 909 h7 l-3.5 4.5z" fill="#ececee"/>
<rect x="1811" y="1004" width="14" height="11" fill="none" stroke="#a8a8ab" stroke-width="1.2"/><rect x="1812" y="1005" width="5.5" height="9" fill="#8a8a8d"/><rect x="1818.5" y="1005" width="5.5" height="9" fill="#8a8a8d"/>
<rect x="1835" y="1004" width="15" height="12" rx="2" fill="#e8e8ea"/><text x="1836.3" y="1014" font-family="Liberation Sans" font-weight="bold" font-size="8.5" fill="#1a1a1c">3D</text>
<rect x="1859" y="1004" width="15" height="12" rx="2" fill="#e8e8ea"/><text x="1860.3" y="1014" font-family="Liberation Sans" font-weight="bold" font-size="8.5" fill="#1a1a1c">2D</text>
<rect x="1880" y="1002" width="1" height="18" fill="#3a3a3d"/>
<path d="M1898.5 1006 a5.5 5.5 0 1 0 1 4.5" fill="none" stroke="#e0e0e2" stroke-width="1.6"/><path d="M1896 1003 l5 2.5 l-4 3.5z" fill="#e0e0e2"/>
<rect x="50" y="864" width="9" height="10" fill="url(#gg)"/><path d="M60 867 l5 -3 v10 l-5 -3z" fill="url(#gg)"/><circle cx="47" cy="875" r="2.8" fill="#dcdcde"/>
<rect x="76.0" y="858" width="1" height="24" fill="#131315"/>
<rect x="339.5" y="858" width="1" height="24" fill="#131315"/>
<rect x="388.2" y="858" width="1" height="24" fill="#131315"/>
<rect x="512.0" y="858" width="1" height="24" fill="#131315"/>
<rect x="92" y="864" width="2" height="12" fill="url(#gg)"/><path d="M101 864 l-7 6 l7 6z M109 864 l-7 6 l7 6z" fill="url(#gg)"/>
<rect x="131" y="864" width="2" height="12" fill="url(#gg)"/><path d="M142 864 l-8 6 l8 6z" fill="url(#gg)"/>
<path d="M169 863 l10 7 l-10 7z" fill="url(#gg)"/>
<path d="M203 864 l8 6 l-8 6z" fill="url(#gg)"/><rect x="212" y="864" width="2" height="12" fill="url(#gg)"/>
<path d="M236 864 l7 6 l-7 6z M243 864 l7 6 l-7 6z" fill="url(#gg)"/><rect x="251" y="864" width="2" height="12" fill="url(#gg)"/>
<path d="M274 873 v-4 q0 -3 3 -3 h10 M288 867 v4 q0 3 -3 3 h-10" fill="none" stroke="#9a9a9d" stroke-width="2"/><path d="M287 863 l3 3 l-3 3z M275 871 l-3 3 l3 3z" fill="#9a9a9d"/>
<path d="M356 870 l4 -4 M356 870 l4 4 M374 870 l-4 -4 M374 870 l-4 4" stroke="#9a9a9d" stroke-width="1.6" fill="none"/><path d="M365 864 l6 6 l-6 6 l-6 -6z" fill="none" stroke="#9a9a9d" stroke-width="1.6"/><path d="M366 866 l-2 4 h2 l-1 4" stroke="#9a9a9d" fill="none"/>
<rect x="408" y="864" width="10" height="9" fill="url(#gg)"/><path d="M419 867 l4 -3 v9 l-4 -3z" fill="url(#gg)"/><path d="M404 872 l4 4 l-4 4 l-4 -4z" fill="none" stroke="#e0e0e2" stroke-width="1.3"/><path d="M404 874 v4 M402 876 h4" stroke="#e0e0e2"/>
<path d="M442 866 v-3 h3 M442 874 v3 h3 M460 866 v-3 h-3 M460 874 v3 h-3" stroke="#a8a8ab" stroke-width="1.4" fill="none"/><rect x="446" y="866" width="7" height="8" fill="url(#gg)"/><path d="M454 868 l3 -2 v8 l-3 -2z" fill="url(#gg)"/>
<rect x="486" y="863" width="9" height="9" fill="url(#gg)"/><path d="M496 866 l4 -3 v9 l-4 -3z" fill="url(#gg)"/><path d="M480 873 h6 M482 877 h6" stroke="#d0d0d2" stroke-width="1.2"/>
<path d="M763 868 h8 l-4 5z" fill="#dcdcde"/><path d="M832 866 h6 l-3 -4z M832 873 h6 l-3 4z" fill="#e0e0e2"/>
<circle cx="53" cy="900" r="4.5" fill="#5ab0f5"/><path d="M50.5 900 h5 M53 897.5 v5" stroke="#1d1d20" stroke-width="1.3"/>
<rect x="42" y="917" width="12" height="12" rx="3" fill="#434346"/><ellipse cx="48" cy="922.5" rx="4" ry="2.3" fill="none" stroke="#6a6a6d" stroke-width="1"/><circle cx="48" cy="922.5" r="1" fill="#6a6a6d"/>
<path d="M66 920 l4 3 l-4 3z" fill="#e8e8ea"/>
<circle cx="86" cy="920" r="3" fill="#aaaaad"/><path d="M80 929 q1 -5 6 -5 q5 0 6 5z" fill="#aaaaad"/>
</svg>
<div class="t" style="left:393px;top:37px;font-size:12px;color:#e8e8ea">1.zprj</div>
<div class="t" style="left:1163px;top:37px;font-size:12px;color:#e8e8ea">2D <span class="k">창</span></div>
<div class="t" style="left:1728px;top:37px;font-size:12px;color:#e8e8ea"><span class="k">물체창</span></div>
<div class="t" style="left:1727px;top:397px;font-size:12px;color:#e8e8ea"><span class="k">속성창</span></div>
<div class="t" style="left:1860px;top:107px;font-size:12px;color:#e8e8ea">CLOFAB</div>
<div class="t" style="left:1703px;top:136px;font-size:12.5px;color:#e8e8ea">Primary</div>
<div class="t" style="left:1652px;top:168px;font-size:12px;color:#e8e8ea">Default Fabric</div>
<div class="t" style="left:911px;top:838px;font-size:12px;color:#e6e6e8"><span class="k" style="transform:scaleX(.91)">애니메이션 편집창</span></div>
<div class="t" style="left:309px;top:865px;font-size:12px;color:#9e9ea1">1X</div>
<div class="t" style="left:521px;top:864px;font-size:13px;color:#e6e6e8"><span class="k">시뮬레이션 퀄리티</span></div>
<div class="t" style="left:624px;top:864px;font-size:12.5px;color:#ececee"><span class="k">사용자 설정</span></div>
<div class="t" style="left:792px;top:864px;font-size:12px;color:#ececee">1</div>
<div class="t" style="left:63px;top:895px;font-size:12.3px;color:#ececee">Add Animation</div>
<div class="t" style="left:96px;top:918px;font-size:12.5px;color:#5aaaf0">Morph</div>
<div class="t" style="left:290px;top:973px;font-size:12.5px;color:#ececee">-100.00</div>
<div class="t" style="left:563px;top:973px;font-size:12.5px;color:#ececee">-30</div>
<div class="t" style="left:1218px;top:973px;font-size:12.5px;color:#ececee">210</div>
<div class="t" style="left:1531px;top:973px;font-size:12.5px;color:#ececee">300.00</div>
<div class="t" style="left:1654px;top:865px;font-size:15px;color:#ececee">Configurations</div>
<div class="t" style="left:1654px;top:907px;font-size:12.5px;color:#e6e6e8">Play Type</div>
<div class="t" style="left:1654px;top:935px;font-size:12.5px;color:#e6e6e8">Current Frame</div>
<div class="t" style="left:1654px;top:961px;font-size:12.5px;color:#e6e6e8">Start Frame</div>
<div class="t" style="left:1782px;top:907px;width:72px;overflow:hidden;font-size:12.5px;color:#ececee">Frame Stepping</div>
<div class="t" style="left:1784px;top:935px;font-size:12.5px;color:#ececee">28.00</div>
<div class="t" style="left:1784px;top:961px;font-size:12.5px;color:#ececee">0.00</div>
<div class="t" style="left:246.9px;width:30px;text-align:center;top:889px;font-size:9.5px;color:#76767a;letter-spacing:-.3px">-28</div>
<div class="t" style="left:269.9px;width:30px;text-align:center;top:889px;font-size:9.5px;color:#76767a;letter-spacing:-.3px">-24</div>
<div class="t" style="left:293.0px;width:30px;text-align:center;top:889px;font-size:9.5px;color:#76767a;letter-spacing:-.3px">-20</div>
<div class="t" style="left:316.1px;width:30px;text-align:center;top:889px;font-size:9.5px;color:#76767a;letter-spacing:-.3px">-16</div>
<div class="t" style="left:339.1px;width:30px;text-align:center;top:889px;font-size:9.5px;color:#76767a;letter-spacing:-.3px">-12</div>
<div class="t" style="left:362.2px;width:30px;text-align:center;top:889px;font-size:9.5px;color:#76767a;letter-spacing:-.3px">-8</div>
<div class="t" style="left:385.2px;width:30px;text-align:center;top:889px;font-size:9.5px;color:#76767a;letter-spacing:-.3px">-4</div>
<div class="t" style="left:408.3px;width:30px;text-align:center;top:889px;font-size:9.5px;color:#76767a;letter-spacing:-.3px">0</div>
<div class="t" style="left:431.4px;width:30px;text-align:center;top:889px;font-size:9.5px;color:#76767a;letter-spacing:-.3px">4</div>
<div class="t" style="left:454.4px;width:30px;text-align:center;top:889px;font-size:9.5px;color:#76767a;letter-spacing:-.3px">8</div>
<div class="t" style="left:477.5px;width:30px;text-align:center;top:889px;font-size:9.5px;color:#76767a;letter-spacing:-.3px">12</div>
<div class="t" style="left:500.5px;width:30px;text-align:center;top:889px;font-size:9.5px;color:#76767a;letter-spacing:-.3px">16</div>
<div class="t" style="left:523.6px;width:30px;text-align:center;top:889px;font-size:9.5px;color:#76767a;letter-spacing:-.3px">20</div>
<div class="t" style="left:546.7px;width:30px;text-align:center;top:889px;font-size:9.5px;color:#76767a;letter-spacing:-.3px">24</div>
<div class="t" style="left:569.7px;width:30px;text-align:center;top:889px;font-size:9.5px;color:#76767a;letter-spacing:-.3px">28</div>
<div class="t" style="left:592.8px;width:30px;text-align:center;top:889px;font-size:9.5px;color:#76767a;letter-spacing:-.3px">32</div>
<div class="t" style="left:615.8px;width:30px;text-align:center;top:889px;font-size:9.5px;color:#76767a;letter-spacing:-.3px">36</div>
<div class="t" style="left:638.9px;width:30px;text-align:center;top:889px;font-size:9.5px;color:#76767a;letter-spacing:-.3px">40</div>
<div class="t" style="left:662.0px;width:30px;text-align:center;top:889px;font-size:9.5px;color:#76767a;letter-spacing:-.3px">44</div>
<div class="t" style="left:685.0px;width:30px;text-align:center;top:889px;font-size:9.5px;color:#76767a;letter-spacing:-.3px">48</div>
<div class="t" style="left:708.1px;width:30px;text-align:center;top:889px;font-size:9.5px;color:#76767a;letter-spacing:-.3px">52</div>
<div class="t" style="left:731.1px;width:30px;text-align:center;top:889px;font-size:9.5px;color:#76767a;letter-spacing:-.3px">56</div>
<div class="t" style="left:754.2px;width:30px;text-align:center;top:889px;font-size:9.5px;color:#76767a;letter-spacing:-.3px">60</div>
<div class="t" style="left:777.3px;width:30px;text-align:center;top:889px;font-size:9.5px;color:#76767a;letter-spacing:-.3px">64</div>
<div class="t" style="left:800.3px;width:30px;text-align:center;top:889px;font-size:9.5px;color:#76767a;letter-spacing:-.3px">68</div>
<div class="t" style="left:823.4px;width:30px;text-align:center;top:889px;font-size:9.5px;color:#76767a;letter-spacing:-.3px">72</div>
<div class="t" style="left:846.4px;width:30px;text-align:center;top:889px;font-size:9.5px;color:#76767a;letter-spacing:-.3px">76</div>
<div class="t" style="left:869.5px;width:30px;text-align:center;top:889px;font-size:9.5px;color:#76767a;letter-spacing:-.3px">80</div>
<div class="t" style="left:892.6px;width:30px;text-align:center;top:889px;font-size:9.5px;color:#76767a;letter-spacing:-.3px">84</div>
<div class="t" style="left:915.6px;width:30px;text-align:center;top:889px;font-size:9.5px;color:#76767a;letter-spacing:-.3px">88</div>
<div class="t" style="left:938.7px;width:30px;text-align:center;top:889px;font-size:9.5px;color:#76767a;letter-spacing:-.3px">92</div>
<div class="t" style="left:961.7px;width:30px;text-align:center;top:889px;font-size:9.5px;color:#76767a;letter-spacing:-.3px">96</div>
<div class="t" style="left:984.8px;width:30px;text-align:center;top:889px;font-size:9.5px;color:#76767a;letter-spacing:-.3px">100</div>
<div class="t" style="left:1007.9px;width:30px;text-align:center;top:889px;font-size:9.5px;color:#76767a;letter-spacing:-.3px">104</div>
<div class="t" style="left:1030.9px;width:30px;text-align:center;top:889px;font-size:9.5px;color:#76767a;letter-spacing:-.3px">108</div>
<div class="t" style="left:1054.0px;width:30px;text-align:center;top:889px;font-size:9.5px;color:#76767a;letter-spacing:-.3px">112</div>
<div class="t" style="left:1077.0px;width:30px;text-align:center;top:889px;font-size:9.5px;color:#76767a;letter-spacing:-.3px">116</div>
<div class="t" style="left:1100.1px;width:30px;text-align:center;top:889px;font-size:9.5px;color:#76767a;letter-spacing:-.3px">120</div>
<div class="t" style="left:1123.2px;width:30px;text-align:center;top:889px;font-size:9.5px;color:#76767a;letter-spacing:-.3px">124</div>
<div class="t" style="left:1146.2px;width:30px;text-align:center;top:889px;font-size:9.5px;color:#76767a;letter-spacing:-.3px">128</div>
<div class="t" style="left:1169.3px;width:30px;text-align:center;top:889px;font-size:9.5px;color:#76767a;letter-spacing:-.3px">132</div>
<div class="t" style="left:1192.3px;width:30px;text-align:center;top:889px;font-size:9.5px;color:#76767a;letter-spacing:-.3px">136</div>
<div class="t" style="left:1215.4px;width:30px;text-align:center;top:889px;font-size:9.5px;color:#76767a;letter-spacing:-.3px">140</div>
<div class="t" style="left:1238.5px;width:30px;text-align:center;top:889px;font-size:9.5px;color:#76767a;letter-spacing:-.3px">144</div>
<div class="t" style="left:1261.5px;width:30px;text-align:center;top:889px;font-size:9.5px;color:#76767a;letter-spacing:-.3px">148</div>
<div class="t" style="left:1284.6px;width:30px;text-align:center;top:889px;font-size:9.5px;color:#76767a;letter-spacing:-.3px">152</div>
<div class="t" style="left:1307.6px;width:30px;text-align:center;top:889px;font-size:9.5px;color:#76767a;letter-spacing:-.3px">156</div>
<div class="t" style="left:1330.7px;width:30px;text-align:center;top:889px;font-size:9.5px;color:#76767a;letter-spacing:-.3px">160</div>
<div class="t" style="left:1353.8px;width:30px;text-align:center;top:889px;font-size:9.5px;color:#76767a;letter-spacing:-.3px">164</div>
<div class="t" style="left:1376.8px;width:30px;text-align:center;top:889px;font-size:9.5px;color:#76767a;letter-spacing:-.3px">168</div>
<div class="t" style="left:1399.9px;width:30px;text-align:center;top:889px;font-size:9.5px;color:#76767a;letter-spacing:-.3px">172</div>
<div class="t" style="left:1422.9px;width:30px;text-align:center;top:889px;font-size:9.5px;color:#76767a;letter-spacing:-.3px">176</div>
<div class="t" style="left:1446.0px;width:30px;text-align:center;top:889px;font-size:9.5px;color:#76767a;letter-spacing:-.3px">180</div>
<div class="t" style="left:1469.1px;width:30px;text-align:center;top:889px;font-size:9.5px;color:#76767a;letter-spacing:-.3px">184</div>
<div class="t" style="left:1492.1px;width:30px;text-align:center;top:889px;font-size:9.5px;color:#76767a;letter-spacing:-.3px">188</div>
<div class="t" style="left:1515.2px;width:30px;text-align:center;top:889px;font-size:9.5px;color:#76767a;letter-spacing:-.3px">192</div>
<div class="t" style="left:1538.2px;width:30px;text-align:center;top:889px;font-size:9.5px;color:#76767a;letter-spacing:-.3px">196</div>
<div class="t" style="left:1561.3px;width:30px;text-align:center;top:889px;font-size:9.5px;color:#76767a;letter-spacing:-.3px">200</div>
<div class="t" style="left:1584.4px;width:30px;text-align:center;top:889px;font-size:9.5px;color:#76767a;letter-spacing:-.3px">204</div>
<div class="t" style="left:1607.4px;width:30px;text-align:center;top:889px;font-size:9.5px;color:#76767a;letter-spacing:-.3px">208</div>
<div style="left:576.2px;top:887px;width:17px;height:15px;background:#ffffff;border-radius:2px"></div>
<div class="t" style="left:569.7px;width:30px;text-align:center;top:890px;font-size:9.5px;color:#666">28</div>
<div class="t" style="left:16px;top:1005px;font-size:11px;color:#d0d0d2">Version: 2025.1.166 (r55971)</div>

</body></html>
